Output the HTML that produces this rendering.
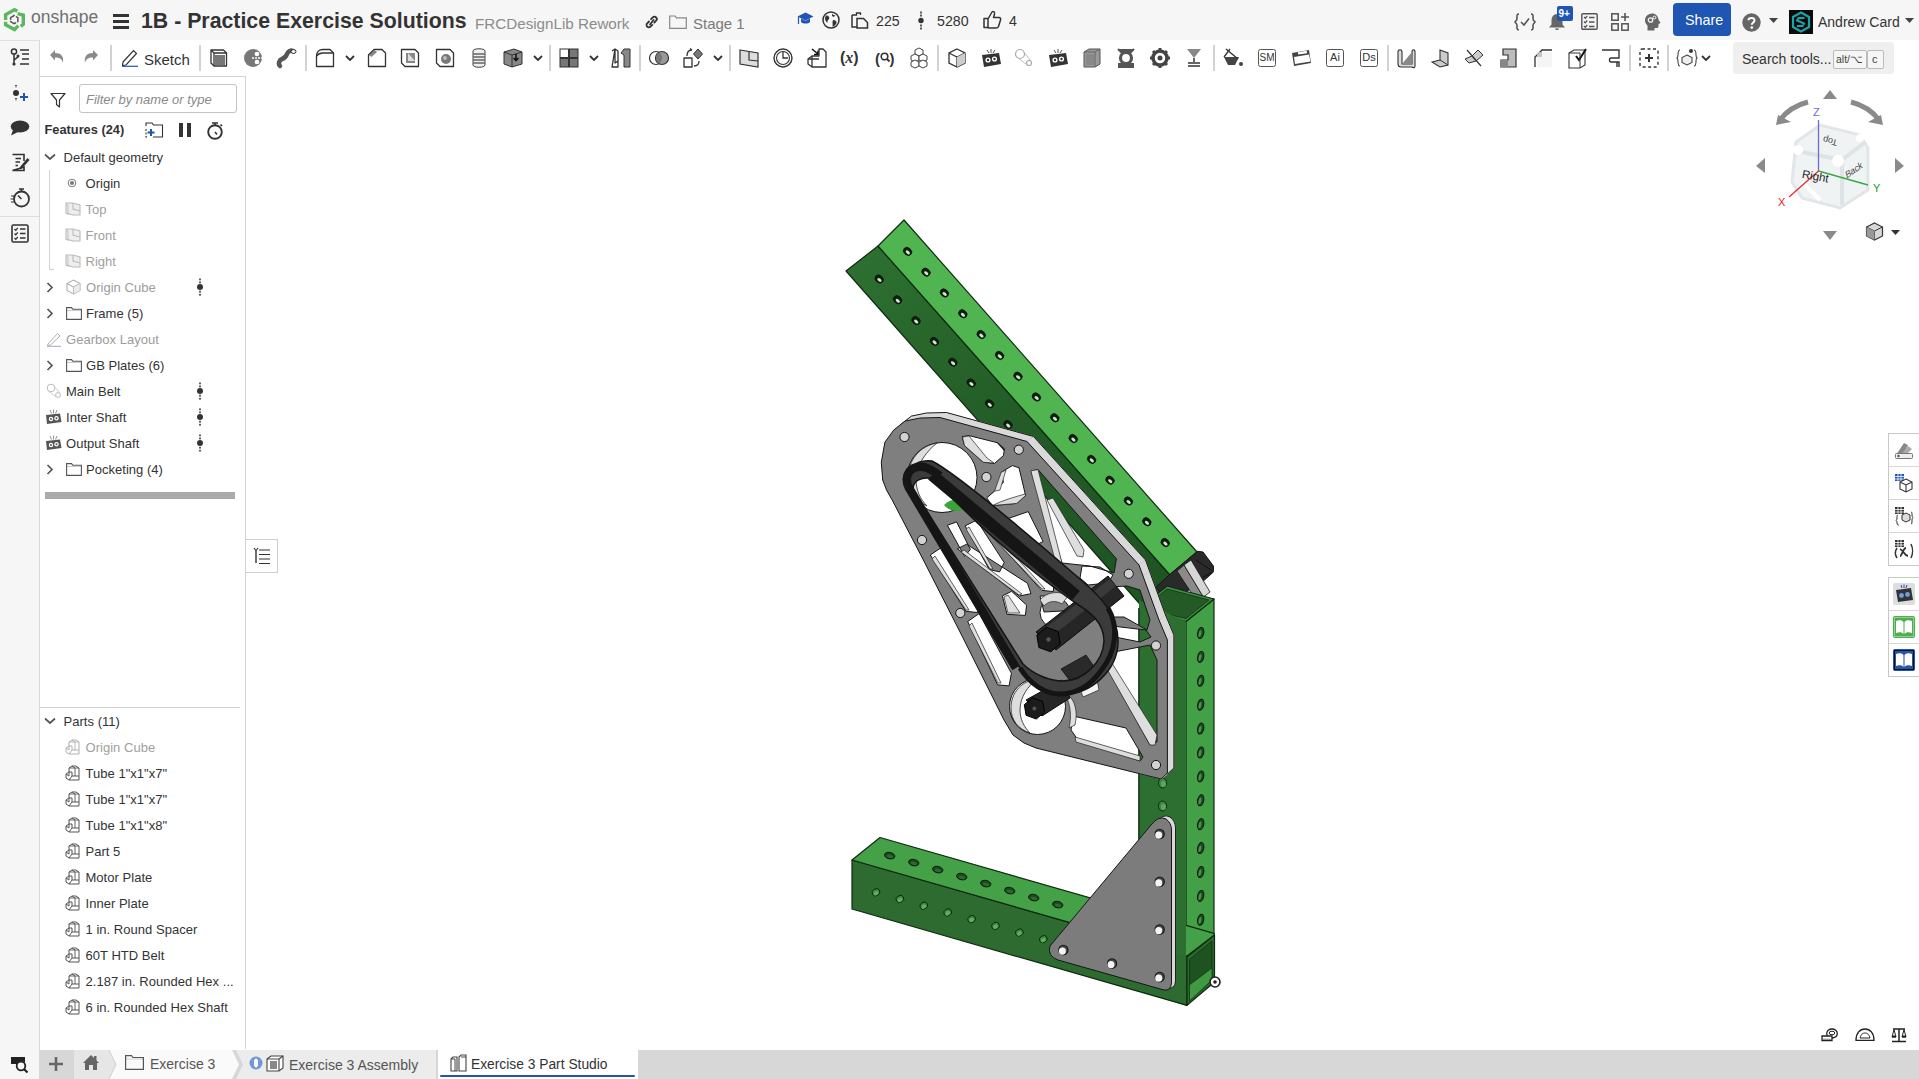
<!DOCTYPE html><html><head><meta charset="utf-8"><style>
*{margin:0;padding:0;box-sizing:border-box}
html,body{width:1919px;height:1079px;overflow:hidden;background:#fff;font-family:"Liberation Sans",sans-serif;color:#333}
.a{position:absolute}
.t{position:absolute;white-space:nowrap;line-height:1}
svg.i{position:absolute;overflow:visible}
</style></head><body>
<div class="a" style="left:0;top:0;width:1919px;height:40px;background:#f6f6f6"></div>
<div class="a" style="left:0;top:40px;width:40px;height:1039px;background:#f6f6f6;border-right:1px solid #d8d8d8;border-top:1px solid #e0e0e0"></div>
<div class="a" style="left:0;top:216px;width:39px;height:1px;background:#dedede"></div>
<div class="a" style="left:40px;top:76px;width:206px;height:973px;background:#fff;border-right:1px solid #d4d4d4;border-top:1px solid #d4d4d4"></div>
<div class="a" style="left:40px;top:1050px;width:1879px;height:29px;background:#d7d7d7"></div>
<svg class="i" style="left:0px;top:0px" width="30" height="35" viewBox="0 0 30 35"><g fill="none" stroke="#5cb85c" stroke-width="3.4" stroke-linejoin="miter"><path d="M5.6 20 V14.8 L14.5 9.6 L17.3 11.2"/><path d="M17.6 13.6 L23.3 15 V24.3 L20.8 26.3"/><path d="M5.6 21.8 V24.8 L14.5 29.6 L18.3 25.6"/></g><g fill="none" stroke="#555" stroke-width="1.5" stroke-linecap="round"><path d="M10.6 19.5 V17.6 L14.2 15.5"/><path d="M16.5 16.8 L17.9 17.6 V21.8"/><path d="M10.6 21.6 L14.2 23.7 L15.6 22.9"/></g></svg>
<div class="t" style="left:31px;top:9.19px;font-size:17.5px;color:#6f6f6f;font-weight:normal;font-style:normal;">onshape</div>
<div class="a" style="left:113px;top:14px;width:16px;height:2.6px;background:#333"></div>
<div class="a" style="left:113px;top:20px;width:16px;height:2.6px;background:#333"></div>
<div class="a" style="left:113px;top:26px;width:16px;height:2.6px;background:#333"></div>
<div class="t" style="left:141px;top:10.97px;font-size:21.3px;color:#333;font-weight:bold;font-style:normal;">1B - Practice Exercise Solutions</div>
<div class="t" style="left:475px;top:15.73px;font-size:15.2px;color:#8c8c8c;font-weight:normal;font-style:normal;">FRCDesignLib Rework</div>
<svg class="i" style="left:644px;top:15px" width="15" height="14" viewBox="0 0 15 14"><g fill="none" stroke="#333" stroke-width="1.8" stroke-linecap="round"><path d="M6 9.5 L9.5 5"/><path d="M5 6.5 L3.2 8.3 a2.3 2.3 0 0 0 3.3 3.3 L8.3 9.8"/><path d="M7 4.2 L8.8 2.4 a2.3 2.3 0 0 1 3.3 3.3 L10.3 7.5"/></g></svg>
<svg class="i" style="left:669px;top:15px" width="18" height="14" viewBox="0 0 18 14"><path d="M0.7 1 H6 L7.5 2.8 H17.3 V13.3 H0.7 Z" fill="none" stroke="#888" stroke-width="1.2"/></svg>
<div class="t" style="left:693px;top:15.90px;font-size:15px;color:#7a7a7a;font-weight:normal;font-style:normal;">Stage 1</div>
<svg class="i" style="left:797px;top:12px" width="17" height="15" viewBox="0 0 17 15"><path d="M8.5 0.5 L16.5 4.5 L8.5 8.5 L0.5 4.5 Z" fill="#1f55b3"/><path d="M4 6.5 V10 C6 12 11 12 13 10 V6.5 L8.5 8.8 Z" fill="#1f55b3"/><path d="M1.5 5 V12" stroke="#1f55b3" stroke-width="1.2"/></svg>
<svg class="i" style="left:822px;top:11px" width="18" height="18" viewBox="0 0 18 18"><circle cx="9" cy="9" r="8" fill="none" stroke="#333" stroke-width="1.5"/><path d="M4 4.5 C6 4 8 6 7 8 C6 9 5 10 5.5 12 C4 11 3 9 3 7 Z M10 2.5 C11 4 12 4 13.5 4.5 C12 6 11 6 10 5 Z M11 9 C13 9 15 10 14.5 12 C13.5 14 12 15.5 10.5 15.8 C11 13 10 11 11 9 Z" fill="#333"/></svg>
<svg class="i" style="left:851px;top:12px" width="18" height="17" viewBox="0 0 18 17"><path d="M1 3 H5.5 V1 H9.5 V3" fill="none" stroke="#333" stroke-width="1.3"/><path d="M1 3 V15 H6" fill="none" stroke="#333" stroke-width="1.5"/><path d="M6 6.5 H12.5 L16.5 10.5 V16 H6 Z" fill="none" stroke="#333" stroke-width="1.5"/></svg>
<div class="t" style="left:876px;top:13.78px;font-size:14.2px;color:#333;font-weight:normal;font-style:normal;">225</div>
<svg class="i" style="left:918px;top:11px" width="6" height="19" viewBox="0 0 6 19"><circle cx="3" cy="9.5" r="2.7" fill="#333"/><rect x="2.2" y="0.5" width="1.6" height="2" fill="#333"/><rect x="2.2" y="3.5" width="1.6" height="2" fill="#333"/><rect x="2.2" y="13.5" width="1.6" height="2" fill="#333"/><rect x="2.2" y="16.5" width="1.6" height="2" fill="#333"/></svg>
<div class="t" style="left:937px;top:13.78px;font-size:14.2px;color:#333;font-weight:normal;font-style:normal;">5280</div>
<svg class="i" style="left:983px;top:10px" width="19" height="19" viewBox="0 0 19 19"><path d="M1 8.5 H5 V17.5 H1 Z M5 9 L9 2 C10.5 1 12 2 11.5 4 L10.5 7.5 H16 C17.5 7.5 18 9 17.5 10 L15.5 16.5 C15 17.5 14 18 13 18 H5" fill="none" stroke="#333" stroke-width="1.5" stroke-linejoin="round"/></svg>
<div class="t" style="left:1009px;top:13.78px;font-size:14.2px;color:#333;font-weight:normal;font-style:normal;">4</div>
<svg class="i" style="left:1514px;top:13px" width="22" height="18" viewBox="0 0 22 18"><path d="M5 1 C2.5 1 3 3 3 5.5 C3 8 1 8.5 1 9 C1 9.5 3 10 3 12.5 C3 15 2.5 17 5 17 M17 1 C19.5 1 19 3 19 5.5 C19 8 21 8.5 21 9 C21 9.5 19 10 19 12.5 C19 15 19.5 17 17 17" fill="none" stroke="#555" stroke-width="1.6"/><path d="M7 9 L10 12 L15 5.5" fill="none" stroke="#555" stroke-width="1.6"/></svg>
<svg class="i" style="left:1547px;top:12px" width="20" height="19" viewBox="0 0 20 19"><path d="M10 2 C5.5 2 4.5 6 4.5 9 V12.5 L2 15.5 H18 L15.5 12.5 V9 C15.5 6 14.5 2 10 2 Z M8 16.5 C8 18.5 12 18.5 12 16.5 Z" fill="#666"/></svg>
<div class="a" style="left:1557px;top:6px;width:16px;height:15px;background:#1f55b3;border-radius:2px"></div>
<div class="t" style="left:1558.5px;top:9.04px;font-size:10px;color:#fff;font-weight:bold;font-style:normal;">9+</div>
<svg class="i" style="left:1581px;top:13px" width="17" height="17" viewBox="0 0 17 17"><rect x="0.8" y="0.8" width="15.4" height="15.4" rx="1" fill="none" stroke="#555" stroke-width="1.4"/><path d="M3 4 L4.3 5.3 L6.2 3 M3 8.5 L4.3 9.8 L6.2 7.5 M3 13 L4.3 14.3 L6.2 12 M8 4.5 H13.5 M8 9 H13.5 M8 13.5 H13.5" fill="none" stroke="#555" stroke-width="1.3"/></svg>
<svg class="i" style="left:1611px;top:13px" width="19" height="18" viewBox="0 0 19 18"><rect x="0.8" y="0.8" width="6.4" height="6.4" fill="none" stroke="#555" stroke-width="1.5"/><rect x="0.8" y="10.8" width="6.4" height="6.4" fill="none" stroke="#555" stroke-width="1.5"/><rect x="10.8" y="10.8" width="6.4" height="6.4" fill="none" stroke="#555" stroke-width="1.5"/><path d="M14 0 V8 M10 4 H18" stroke="#555" stroke-width="1.6"/></svg>
<svg class="i" style="left:1644px;top:13px" width="18" height="18" viewBox="0 0 18 18"><path d="M8.5 0.5 C4 0.5 1 3.5 1 7.5 C1 10 2.5 11.5 3.5 12.5 V17.5 H10.5 V15 H13 C14 15 14.5 14 14.5 13 V11 L16.5 10 L14.5 6.5 C14 3 11.5 0.5 8.5 0.5 Z" fill="#666"/><circle cx="6.5" cy="7" r="2.2" fill="none" stroke="#f6f6f6" stroke-width="1.3"/><circle cx="10.5" cy="4.5" r="1.4" fill="none" stroke="#f6f6f6" stroke-width="1"/></svg>
<div class="a" style="left:1673px;top:3px;width:58px;height:33px;background:#1f55b3;border-radius:4px"></div>
<div class="t" style="left:1685px;top:13.40px;font-size:14.3px;color:#fff;font-weight:normal;font-style:normal;">Share</div>
<svg class="i" style="left:1742px;top:13px" width="19" height="19" viewBox="0 0 19 19"><circle cx="9.5" cy="9.5" r="9.2" fill="#666"/><path d="M6.5 7.2 C6.5 4.5 12.5 4.2 12.5 7.5 C12.5 9.5 9.8 9.5 9.8 11.8" fill="none" stroke="#fff" stroke-width="2"/><circle cx="9.8" cy="14.6" r="1.3" fill="#fff"/></svg>
<svg class="i" style="left:1769px;top:18px" width="9" height="5" viewBox="0 0 9 5"><path d="M0 0 H9 L4.5 5 Z" fill="#444"/></svg>
<svg class="i" style="left:1789px;top:10px" width="24" height="24" viewBox="0 0 24 24"><rect width="24" height="24" fill="#0b0b0b"/><path d="M12 2.5 L20 7 V17 L12 21.5 L4 17 V7 Z" fill="none" stroke="#1aa3a9" stroke-width="2.2"/><path d="M15.5 8 L9.5 8 L8 10.5 L15 13.5 L13.5 16 L8 16" fill="none" stroke="#1aa3a9" stroke-width="2"/></svg>
<div class="t" style="left:1818px;top:14.65px;font-size:14px;color:#333;font-weight:normal;font-style:normal;">Andrew Card</div>
<svg class="i" style="left:1905px;top:18px" width="9" height="5" viewBox="0 0 9 5"><path d="M0 0 H9 L4.5 5 Z" fill="#444"/></svg>
<svg class="i" style="left:10px;top:48px" width="20" height="19" viewBox="0 0 20 19"><circle cx="4" cy="3.5" r="2.6" fill="none" stroke="#333" stroke-width="1.5"/><path d="M4 6 V16 M4 13 C4 10 8 11 8 8" fill="none" stroke="#333" stroke-width="1.5"/><circle cx="4" cy="16" r="1.6" fill="#333"/><circle cx="8" cy="8" r="1.5" fill="#333"/><path d="M10 2 H19 M12 6 H19 M12 11 H19 M10 16 H19" stroke="#333" stroke-width="1.6"/></svg>
<svg class="i" style="left:46.0px;top:47.0px" width="22" height="22" viewBox="0 0 22 22"><path d="M4 8 L9 3 V6 C15 6 18 9 17 16 C16 12 14 10.5 9 10.5 V13.5 Z" fill="#8a8a8a"/></svg>
<svg class="i" style="left:80.0px;top:47.0px" width="22" height="22" viewBox="0 0 22 22"><path d="M18 8 L13 3 V6 C7 6 4 9 5 16 C6 12 8 10.5 13 10.5 V13.5 Z" fill="#8a8a8a"/></svg>
<div class="a" style="left:110px;top:45px;width:2px;height:26px;background:#d2d2d2"></div>
<svg class="i" style="left:120px;top:48px" width="19" height="19" viewBox="0 0 19 19"><path d="M3 14 L13.5 2.5 L16.5 5.5 L6 17 L2.5 17.5 Z" fill="none" stroke="#333" stroke-width="1.2"/><path d="M2 18.3 H18" stroke="#1f55b3" stroke-width="1.2"/></svg>
<div class="t" style="left:144px;top:51.60px;font-size:15px;color:#333;font-weight:normal;font-style:normal;">Sketch</div>
<div class="a" style="left:199px;top:45px;width:2px;height:26px;background:#d2d2d2"></div>
<svg class="i" style="left:208.0px;top:47.0px" width="22" height="22" viewBox="0 0 22 22"><path d="M3 3 H15.5 L18.5 6 V19 H6 L3 16 Z" stroke="#333" fill="none" stroke-width="1.3" stroke-linejoin="round"/><rect x="7" y="8" width="10" height="10" fill="#777"/><path d="M3 3 L6 6 H18.5 M6 6 V19" stroke="#333" fill="none" stroke-width="1.3" stroke-linejoin="round"/></svg>
<svg class="i" style="left:242.0px;top:47.0px" width="22" height="22" viewBox="0 0 22 22"><path d="M11 2 A9 9 0 1 0 11 20 A9 9 0 0 1 11 2 Z" fill="#777"/><circle cx="11" cy="11" r="9" fill="#777"/><circle cx="15" cy="7" r="2.3" fill="#fff"/><circle cx="15" cy="15" r="2.3" fill="#fff"/><path d="M10 11 H21" stroke="#fff" stroke-width="1.3" stroke-dasharray="2 1"/></svg>
<svg class="i" style="left:276.0px;top:47.0px" width="22" height="22" viewBox="0 0 22 22"><path d="M4 19 C2 17 3 13 6 12 C9 11 10 10 11 7 C12 4 15 3 17 4" fill="none" stroke="#555" stroke-width="4.5" stroke-linecap="round"/><ellipse cx="17.5" cy="4.5" rx="2.5" ry="2" fill="#eee" stroke="#333"/></svg>
<div class="a" style="left:305px;top:45px;width:2px;height:26px;background:#d2d2d2"></div>
<svg class="i" style="left:314.0px;top:47.0px" width="22" height="22" viewBox="0 0 22 22"><path d="M2.5 19.5 V9 C2.5 5 5 2.5 9 2.5 H16 L19.5 6 V19.5 Z" stroke="#333" fill="none" stroke-width="1.3" stroke-linejoin="round"/><path d="M2.5 9 C4 7 6 6 9 6 H19.5" stroke="#333" fill="none" stroke-width="1.3" stroke-linejoin="round"/></svg>
<svg class="i" style="left:345px;top:55px" width="10" height="6" viewBox="0 0 10 6"><path d="M1 1 L5 5 L9 1" fill="none" stroke="#333" stroke-width="1.8"/></svg>
<svg class="i" style="left:366.0px;top:47.0px" width="22" height="22" viewBox="0 0 22 22"><path d="M2.5 19.5 V8 L8 2.5 H16 L19.5 6 V19.5 Z" stroke="#333" fill="none" stroke-width="1.3" stroke-linejoin="round"/><path d="M2.5 8 L5.5 6 L9 4" stroke="#333" fill="none" stroke-width="1.3" stroke-linejoin="round"/><path d="M3 8 L8.5 3 L11 5 L5.5 10Z" fill="#888"/></svg>
<svg class="i" style="left:399.0px;top:47.0px" width="22" height="22" viewBox="0 0 22 22"><path d="M2.5 2.5 H16 L19.5 6 V19.5 H6 L2.5 16 Z" stroke="#333" fill="none" stroke-width="1.3" stroke-linejoin="round"/><path d="M7 6 V16 H16 V6" fill="#888"/><path d="M9 6 V14 H16" fill="#ddd"/></svg>
<svg class="i" style="left:434.0px;top:47.0px" width="22" height="22" viewBox="0 0 22 22"><path d="M2.5 2.5 H16 L19.5 6 V19.5 H6 L2.5 16 Z" stroke="#333" fill="none" stroke-width="1.3" stroke-linejoin="round"/><circle cx="12" cy="12" r="5" fill="#777"/><circle cx="11" cy="11" r="2" fill="#bbb"/></svg>
<svg class="i" style="left:468.0px;top:47.0px" width="22" height="22" viewBox="0 0 22 22"><path d="M5 4 C5 1 17 1 17 4 V18 C17 21 5 21 5 18 Z" fill="#eee" stroke="#444" stroke-width="1"/><path d="M5 7 H17 M5 10 H17 M5 13 H17 M5 16 H17" stroke="#666" stroke-width="1.3"/></svg>
<svg class="i" style="left:502.0px;top:47.0px" width="22" height="22" viewBox="0 0 22 22"><path d="M2 5 L12 2 L20 5 V17 L10 20 L2 17 Z" fill="#888" stroke="#333" stroke-width="1"/><path d="M2 5 L10 8 L20 5 M10 8 V20" stroke="#333" fill="none" stroke-width="1"/><path d="M14 7 V13 M11.5 11 L14 13.5 L16.5 11" stroke="#111" stroke-width="1.6" fill="none"/></svg>
<svg class="i" style="left:533px;top:55px" width="10" height="6" viewBox="0 0 10 6"><path d="M1 1 L5 5 L9 1" fill="none" stroke="#333" stroke-width="1.8"/></svg>
<div class="a" style="left:549px;top:45px;width:2px;height:26px;background:#d2d2d2"></div>
<svg class="i" style="left:558.0px;top:47.0px" width="22" height="22" viewBox="0 0 22 22"><rect x="2" y="2" width="8.5" height="8.5" fill="#fff" stroke="#333"/><rect x="11.5" y="2" width="8.5" height="8.5" fill="#777" stroke="#333"/><rect x="2" y="11.5" width="8.5" height="8.5" fill="#777" stroke="#333"/><rect x="11.5" y="11.5" width="8.5" height="8.5" fill="#777" stroke="#333"/></svg>
<svg class="i" style="left:589px;top:55px" width="10" height="6" viewBox="0 0 10 6"><path d="M1 1 L5 5 L9 1" fill="none" stroke="#333" stroke-width="1.8"/></svg>
<svg class="i" style="left:610.0px;top:47.0px" width="22" height="22" viewBox="0 0 22 22"><path d="M2 4 L5 2 V16 L8 14 V6 M5 2 L8 4 V20 L2 20 Z" stroke="#333" fill="none" stroke-width="1.3" stroke-linejoin="round"/><path d="M11 6 L14 2 H20 V20 H14 V8 Z" fill="#888" stroke="#333"/></svg>
<div class="a" style="left:639px;top:45px;width:2px;height:26px;background:#d2d2d2"></div>
<svg class="i" style="left:648.0px;top:47.0px" width="22" height="22" viewBox="0 0 22 22"><circle cx="8" cy="11" r="6.5" fill="#fff" stroke="#333" stroke-width="1.2"/><circle cx="14" cy="11" r="6.5" fill="#999" stroke="#333" stroke-width="1.2"/><path d="M11 5.5 A6.5 6.5 0 0 1 11 16.5 A6.5 6.5 0 0 1 11 5.5Z" fill="#777"/></svg>
<svg class="i" style="left:682.0px;top:47.0px" width="22" height="22" viewBox="0 0 22 22"><rect x="2" y="11" width="8" height="9" stroke="#333" fill="none" stroke-width="1.3" stroke-linejoin="round"/><path d="M16 2 L20.5 7 L16 12 L11.5 7Z" fill="#777" stroke="#333"/><path d="M5 9 C5 5 7 3 10 3 M10 3 L8 1.5 M17 14 C17 17 15 19 12 19" stroke="#333" fill="none" stroke-width="1.3"/></svg>
<svg class="i" style="left:713px;top:55px" width="10" height="6" viewBox="0 0 10 6"><path d="M1 1 L5 5 L9 1" fill="none" stroke="#333" stroke-width="1.8"/></svg>
<div class="a" style="left:729px;top:45px;width:2px;height:26px;background:#d2d2d2"></div>
<svg class="i" style="left:738.0px;top:47.0px" width="22" height="22" viewBox="0 0 22 22"><path d="M2 3 L20 6 V20 L2 17 Z" fill="#ddd" stroke="#333" stroke-width="1.2"/><path d="M11 4.5 V13 L20 14" stroke="#333" fill="none" stroke-width="1.2"/></svg>
<svg class="i" style="left:772.0px;top:47.0px" width="22" height="22" viewBox="0 0 22 22"><circle cx="11" cy="11" r="9" fill="none" stroke="#333" stroke-width="1.4"/><circle cx="11" cy="11" r="6.5" fill="none" stroke="#333" stroke-width="1.1"/><path d="M11 5 V11 H16" stroke="#333" fill="none" stroke-width="1.3"/></svg>
<svg class="i" style="left:806.0px;top:47.0px" width="22" height="22" viewBox="0 0 22 22"><path d="M2 12 L6 9 H13 V2 H17 L20 5 V20 H6 L2 17 Z" stroke="#333" fill="none" stroke-width="1.3" stroke-linejoin="round"/><path d="M6 9 V20 M2 12 H13" stroke="#333" fill="none" stroke-width="1.3" stroke-linejoin="round"/><path d="M6 2 L12 7 M12 3.5 V7.5 H8" stroke="#111" fill="none" stroke-width="1.5"/></svg>
<div class="t" style="left:840px;top:50.46px;font-size:16px;color:#333;font-weight:bold;font-style:normal;">(<i style="font-family:Liberation Serif">x</i>)</div>
<div class="t" style="left:875px;top:51.30px;font-size:15px;color:#333;font-weight:bold;font-style:normal;">(</div>
<div class="t" style="left:889.5px;top:51.30px;font-size:15px;color:#333;font-weight:bold;font-style:normal;">)</div>
<svg class="i" style="left:880px;top:52px" width="10" height="11" viewBox="0 0 10 11"><circle cx="4.5" cy="4.5" r="3.3" fill="none" stroke="#333" stroke-width="1.6"/><path d="M7 7 L9.5 9.5" stroke="#333" stroke-width="1.8"/></svg>
<svg class="i" style="left:908.0px;top:47.0px" width="22" height="22" viewBox="0 0 22 22"><g fill="#fff" stroke="#444" stroke-width="1"><path d="M11 1 L15 3 V7 L11 9 L7 7 V3Z"/><path d="M7 7 L11 9 V13 L7 15 L3 13 V9Z"/><path d="M15 7 L19 9 V13 L15 15 L11 13 V9Z"/><path d="M7 13 L11 15 V19 L7 21 L3 19 V15Z" /><path d="M15 13 L19 15 V19 L15 21 L11 19 V15Z"/></g></svg>
<div class="a" style="left:937px;top:45px;width:2px;height:26px;background:#d2d2d2"></div>
<svg class="i" style="left:946.0px;top:47.0px" width="22" height="22" viewBox="0 0 22 22"><path d="M11 2 L19 6 V16 L11 20 L3 16 V6 Z" fill="#fff" stroke="#333" stroke-width="1.3"/><path d="M3 6 L11 10 L19 6 M11 10 V20" stroke="#333" fill="none" stroke-width="1.3"/><path d="M11 10 L19 6 V16 L11 20Z" fill="#ccc"/></svg>
<svg class="i" style="left:980.0px;top:47.0px" width="22" height="22" viewBox="0 0 22 22"><path d="M2 8 L19 6 L21 17 L4 20 Z" fill="#333"/><circle cx="8" cy="13" r="2.6" fill="#fff"/><circle cx="14.5" cy="12" r="2.6" fill="#fff"/><circle cx="8" cy="13" r="1.2" fill="#333"/><circle cx="14.5" cy="12" r="1.2" fill="#333"/><path d="M7 3 L9 6 M11 2 V6 M15 3 L13 6" stroke="#555" stroke-width="1"/></svg>
<svg class="i" style="left:1013.0px;top:47.0px" width="22" height="22" viewBox="0 0 22 22"><circle cx="7" cy="7" r="4.5" fill="none" stroke="#aaa" stroke-width="1.2"/><circle cx="16" cy="16" r="2.5" fill="none" stroke="#aaa" stroke-width="1.2"/><path d="M4 10 L14 18 M10 4 L18 14" stroke="#bbb" stroke-width="1"/></svg>
<svg class="i" style="left:1047.0px;top:47.0px" width="22" height="22" viewBox="0 0 22 22"><path d="M2 8 L19 6 L21 17 L4 20 Z" fill="#333"/><circle cx="8" cy="13" r="2.6" fill="#fff"/><circle cx="14.5" cy="12" r="2.6" fill="#fff"/><circle cx="8" cy="13" r="1.2" fill="#333"/><circle cx="14.5" cy="12" r="1.2" fill="#333"/><path d="M7 3 L9 6 M11 2 V6 M15 3 L13 6" stroke="#555" stroke-width="1"/></svg>
<svg class="i" style="left:1081.0px;top:47.0px" width="22" height="22" viewBox="0 0 22 22"><path d="M3 5 L8 2 H19 V17 L14 20 H3 Z" fill="#999" stroke="#555"/><path d="M3 5 H14 V20 M14 5 L19 2" stroke="#666" fill="none"/><rect x="5" y="7" width="8" height="11" fill="#888"/></svg>
<svg class="i" style="left:1115.0px;top:47.0px" width="22" height="22" viewBox="0 0 22 22"><path d="M3 2 L6 5 H16 L19 2 M4 20 H18 V17 H4 Z" fill="#555" stroke="#555" stroke-width="2"/><circle cx="11" cy="11" r="5.5" fill="none" stroke="#555" stroke-width="3.2"/></svg>
<svg class="i" style="left:1149.0px;top:47.0px" width="22" height="22" viewBox="0 0 22 22"><circle cx="11" cy="11" r="7" fill="none" stroke="#444" stroke-width="3.5"/><path d="M11 1 V4 M11 18 V21 M1 11 H4 M18 11 H21 M4 4 L6 6 M16 16 L18 18 M4 18 L6 16 M16 6 L18 4" stroke="#444" stroke-width="3"/><circle cx="11" cy="11" r="2.5" fill="#444"/></svg>
<svg class="i" style="left:1183.0px;top:47.0px" width="22" height="22" viewBox="0 0 22 22"><path d="M4 2 H18 L11 11 Z" fill="#888"/><path d="M11 11 V15 M5 16 H17 M5 19 H17" stroke="#666" stroke-width="2"/></svg>
<div class="a" style="left:1213px;top:45px;width:2px;height:26px;background:#d2d2d2"></div>
<svg class="i" style="left:1222.0px;top:47.0px" width="22" height="22" viewBox="0 0 22 22"><path d="M2 10 H17 L13 18 H6 Z" fill="#444"/><path d="M4 2 L16 12 M8 2 L2 10" stroke="#333" stroke-width="1.3" fill="none"/><circle cx="19" cy="17" r="2" fill="#444"/></svg>
<svg class="i" style="left:1256.0px;top:47.0px" width="22" height="22" viewBox="0 0 22 22"><rect x="2.5" y="2.5" width="17" height="17" rx="2" fill="#fff" stroke="#555" stroke-width="1"/></svg>
<div class="t" style="left:1257px;top:52.5px;width:20px;text-align:center;font-size:10px;color:#333">SM</div>
<svg class="i" style="left:1290.0px;top:47.0px" width="22" height="22" viewBox="0 0 22 22"><path d="M2 6 L19 3 L21 16 L4 19 Z" fill="#444"/><path d="M4 10 L19 7.5 L20.5 14.5 L5 17Z" fill="#fff"/><rect x="8" y="4.5" width="9" height="2.5" fill="#fff" transform="rotate(-9 12 6)"/></svg>
<svg class="i" style="left:1324.0px;top:47.0px" width="22" height="22" viewBox="0 0 22 22"><rect x="2.5" y="2.5" width="17" height="17" rx="2" fill="#fff" stroke="#555" stroke-width="1"/></svg>
<div class="t" style="left:1325px;top:52.0px;width:20px;text-align:center;font-size:11px;color:#333">Ai</div>
<svg class="i" style="left:1358.0px;top:47.0px" width="22" height="22" viewBox="0 0 22 22"><rect x="2.5" y="2.5" width="17" height="17" rx="2" fill="#fff" stroke="#555" stroke-width="1"/></svg>
<div class="t" style="left:1359px;top:52.0px;width:20px;text-align:center;font-size:11px;color:#333">Ds</div>
<div class="a" style="left:1387px;top:45px;width:2px;height:26px;background:#d2d2d2"></div>
<svg class="i" style="left:1395.0px;top:47.0px" width="22" height="22" viewBox="0 0 22 22"><path d="M3 5 C3 2 7 2 7 5 V17 H17 V5 C17 2 20 2 20 5 V19 C20 21 18 21 17 20 H6 C4 20 3 19 3 17Z" fill="#ddd" stroke="#333" stroke-width="1.1"/><path d="M7 17 L17 17 L17 5" fill="#888"/></svg>
<svg class="i" style="left:1429.0px;top:47.0px" width="22" height="22" viewBox="0 0 22 22"><path d="M3 15 L11 13 V3 L19 6 V18 L11 20 Z" fill="#ccc" stroke="#333" stroke-width="1.1"/><path d="M11 13 L19 18" stroke="#333" stroke-width="1"/></svg>
<svg class="i" style="left:1463.0px;top:47.0px" width="22" height="22" viewBox="0 0 22 22"><path d="M2 12 L9 9 L13 14 L6 16Z M9 9 L15 3 L20 8 L13 14" fill="#ccc" stroke="#333" stroke-width="1"/><path d="M4 3 L18 19" stroke="#333" stroke-width="1.2"/></svg>
<svg class="i" style="left:1497.0px;top:47.0px" width="22" height="22" viewBox="0 0 22 22"><path d="M6 2 H19 V20 H4 V13 H11 V8 H6 Z" fill="#bbb" stroke="#333" stroke-width="1.2"/><path d="M4 13 H11 V20 H4Z" fill="#888"/></svg>
<svg class="i" style="left:1532.0px;top:47.0px" width="22" height="22" viewBox="0 0 22 22"><path d="M3 20 V10 L10 3 H20" fill="none" stroke="#333" stroke-width="1.3"/><path d="M4 10 L10 4 V10 Z" fill="#888"/><rect x="5" y="5" width="15" height="15" fill="#eee" opacity=".6"/></svg>
<svg class="i" style="left:1566.0px;top:47.0px" width="22" height="22" viewBox="0 0 22 22"><path d="M3 6 L8 3 H19 V18 L14 21 H3 Z" fill="#fff" stroke="#333" stroke-width="1.1"/><path d="M10 9 L13 13 L20 2" stroke="#111" stroke-width="2" fill="none"/><path d="M3 6 H14 V21" stroke="#333" fill="none"/></svg>
<svg class="i" style="left:1600.0px;top:47.0px" width="22" height="22" viewBox="0 0 22 22"><path d="M2 3 H19 V11 H11 C9 11 9 15 11 15 H19 V20" fill="none" stroke="#333" stroke-width="1.4"/><path d="M17 15 V20" stroke="#333" stroke-width="1.4"/></svg>
<div class="a" style="left:1629px;top:45px;width:2px;height:26px;background:#d2d2d2"></div>
<svg class="i" style="left:1638.0px;top:47.0px" width="22" height="22" viewBox="0 0 22 22"><rect x="2" y="2" width="18" height="18" rx="2" fill="none" stroke="#333" stroke-width="1.4" stroke-dasharray="3 2.5"/><path d="M11 7 V15 M7 11 H15" stroke="#333" stroke-width="2"/></svg>
<div class="a" style="left:1667px;top:45px;width:2px;height:26px;background:#d2d2d2"></div>
<svg class="i" style="left:1676.0px;top:47.0px" width="22" height="22" viewBox="0 0 22 22"><path d="M4 3 C2 3 2 5 2 8 C2 10 1 11 1 11 C1 11 2 12 2 14 C2 17 2 19 4 19 M18 3 C20 3 20 5 20 8 C20 10 21 11 21 11 C21 11 20 12 20 14 C20 17 20 19 18 19" fill="none" stroke="#444" stroke-width="1.1"/><path d="M11 8 L16 10.5 V15.5 L11 18 L6 15.5 V10.5 Z" fill="#eee" stroke="#444" stroke-width="1.1"/><circle cx="15" cy="4" r="2" fill="#333"/></svg>
<svg class="i" style="left:1701px;top:55px" width="10" height="6" viewBox="0 0 10 6"><path d="M1 1 L5 5 L9 1" fill="none" stroke="#333" stroke-width="1.8"/></svg>
<div class="a" style="left:1733px;top:42px;width:161px;height:32px;background:#efefef;border-radius:4px"></div>
<div class="t" style="left:1742px;top:51.65px;font-size:14px;color:#333;font-weight:normal;font-style:normal;">Search tools...</div>
<div class="a" style="left:1833px;top:50px;width:34px;height:19px;border:1px solid #bbb;border-radius:2px;background:#f6f6f6"></div>
<div class="t" style="left:1836px;top:54.11px;font-size:10.5px;color:#444;font-weight:normal;font-style:normal;">alt/&#x2325;</div>
<div class="a" style="left:1867px;top:50px;width:17px;height:19px;border:1px solid #bbb;border-radius:2px;background:#f6f6f6"></div>
<div class="t" style="left:1872px;top:53.69px;font-size:11px;color:#444;font-weight:normal;font-style:normal;">c</div>
<svg class="i" style="left:10px;top:84px" width="20" height="20" viewBox="0 0 20 20"><path d="M6 1 V4 M6 14 V17" stroke="#333" stroke-width="1.6" stroke-dasharray="1.6 1.2"/><circle cx="6" cy="9" r="3" fill="#333"/><path d="M14 9 V17 M10 13 H18" stroke="#1f55b3" stroke-width="2"/></svg>
<svg class="i" style="left:10px;top:120px" width="20" height="16" viewBox="0 0 20 16"><ellipse cx="10" cy="6.5" rx="9.3" ry="6" fill="#333"/><path d="M3 10 L1 15.5 L9 11.5Z" fill="#333"/></svg>
<svg class="i" style="left:11px;top:153px" width="19" height="19" viewBox="0 0 19 19"><path d="M1.5 1.5 H13 V8 M13 14 V17.5 H1.5 Z" fill="none" stroke="#333" stroke-width="1.6"/><path d="M4.5 5.5 H10 M4.5 9 H9 M4.5 12.5 H7" stroke="#333" stroke-width="1.5"/><path d="M9 14 L16.5 5 L18.5 7 L11 15.5 L8.5 16.5Z" fill="#333"/></svg>
<svg class="i" style="left:10px;top:187px" width="21" height="21" viewBox="0 0 21 21"><circle cx="11.5" cy="12" r="7.5" fill="none" stroke="#333" stroke-width="1.8"/><path d="M9 2 H14 M11.5 2 V4.5 M11.5 12 L8 8.5" stroke="#333" stroke-width="1.6"/><path d="M1 9 H4 M0.5 12 H3.5 M1 15 H4" stroke="#333" stroke-width="1"/></svg>
<svg class="i" style="left:11px;top:224px" width="18" height="19" viewBox="0 0 18 19"><rect x="1" y="1" width="16" height="17" rx="1.5" fill="none" stroke="#333" stroke-width="1.6"/><path d="M3.5 5 L4.8 6.3 L6.8 3.8 M3.5 9.5 L4.8 10.8 L6.8 8.3 M3.5 14 L4.8 15.3 L6.8 12.8 M9 5 H14.5 M9 9.5 H14.5 M9 14 H14.5" fill="none" stroke="#333" stroke-width="1.3"/></svg>
<svg class="i" style="left:50px;top:92px" width="16" height="16" viewBox="0 0 16 16"><path d="M1 1.5 H15 L9.5 8 V15 L6.5 12.5 V8 Z" fill="none" stroke="#333" stroke-width="1.2" stroke-linejoin="round"/></svg>
<div class="a" style="left:79px;top:84px;width:158px;height:29px;border:1px solid #c4c4c4;border-radius:3px;background:#fff"></div>
<div class="t" style="left:86px;top:92.50px;font-size:13px;color:#8a8a8a;font-weight:normal;font-style:italic;">Filter by name or type</div>
<div class="t" style="left:44.5px;top:123.96px;font-size:12.8px;color:#333;font-weight:bold;font-style:normal;">Features (24)</div>
<svg class="i" style="left:145px;top:122px" width="19" height="16" viewBox="0 0 19 16"><path d="M1 4 V1 H7 L8.5 3 H17.5 V15 H8" fill="none" stroke="#333" stroke-width="1.1"/><path d="M1 7 V15 H3" fill="none" stroke="#333" stroke-width="1.1" stroke-dasharray="2 1.5"/><path d="M6 7 V14 M2.5 10.5 H9.5" stroke="#1f55b3" stroke-width="2"/></svg>
<div class="a" style="left:179px;top:123px;width:4px;height:13.5px;background:#333"></div>
<div class="a" style="left:187px;top:123px;width:4px;height:13.5px;background:#333"></div>
<svg class="i" style="left:206px;top:121px" width="18" height="19" viewBox="0 0 18 19"><circle cx="9" cy="11" r="6.8" fill="none" stroke="#333" stroke-width="1.9"/><path d="M6 2 H12 M9 2 V4 M9 11 L11 13.5 M14.5 3.5 L16 5" stroke="#333" stroke-width="1.6"/></svg>
<svg class="i" style="left:44px;top:153px" width="12" height="8" viewBox="0 0 12 8"><path d="M1 1.5 L6 6 L11 1.5" fill="none" stroke="#555" stroke-width="1.7"/></svg>
<div class="t" style="left:63.5px;top:150.70px;font-size:13px;color:#333;font-weight:normal;font-style:normal;letter-spacing:0.03px;">Default geometry</div>
<div class="a" style="left:49px;top:170px;width:1px;height:100px;background:#d4d4d4"></div>
<div class="a" style="left:49px;top:269px;width:5px;height:1px;background:#d4d4d4"></div>
<svg class="i" style="left:67px;top:178px" width="10" height="10" viewBox="0 0 10 10"><circle cx="5" cy="5" r="3.8" fill="none" stroke="#777" stroke-width="1"/><circle cx="5" cy="5" r="2" fill="#777"/></svg>
<div class="t" style="left:85.5px;top:176.70px;font-size:13px;color:#333;font-weight:normal;font-style:normal;letter-spacing:0.03px;">Origin</div>
<svg class="i" style="left:65px;top:202px" width="16" height="14" viewBox="0 0 16 14"><path d="M1 1 L8 1 L15 3 L15 13 L8 13 L1 11 Z" fill="#eee" stroke="#bbb" stroke-width="1.1"/><path d="M8 1 V7 L15 9" fill="none" stroke="#bbb" stroke-width="1.1"/><path d="M1 1 L3 3 V13" fill="none" stroke="#bbb" stroke-width=".9"/></svg>
<div class="t" style="left:85.5px;top:202.70px;font-size:13px;color:#a0a0a0;font-weight:normal;font-style:normal;letter-spacing:0.03px;">Top</div>
<svg class="i" style="left:65px;top:228px" width="16" height="14" viewBox="0 0 16 14"><path d="M1 1 L8 1 L15 3 L15 13 L8 13 L1 11 Z" fill="#eee" stroke="#bbb" stroke-width="1.1"/><path d="M8 1 V7 L15 9" fill="none" stroke="#bbb" stroke-width="1.1"/><path d="M1 1 L3 3 V13" fill="none" stroke="#bbb" stroke-width=".9"/></svg>
<div class="t" style="left:85.5px;top:228.70px;font-size:13px;color:#a0a0a0;font-weight:normal;font-style:normal;letter-spacing:0.03px;">Front</div>
<svg class="i" style="left:65px;top:254px" width="16" height="14" viewBox="0 0 16 14"><path d="M1 1 L8 1 L15 3 L15 13 L8 13 L1 11 Z" fill="#eee" stroke="#bbb" stroke-width="1.1"/><path d="M8 1 V7 L15 9" fill="none" stroke="#bbb" stroke-width="1.1"/><path d="M1 1 L3 3 V13" fill="none" stroke="#bbb" stroke-width=".9"/></svg>
<div class="t" style="left:85.5px;top:254.70px;font-size:13px;color:#a0a0a0;font-weight:normal;font-style:normal;letter-spacing:0.03px;">Right</div>
<svg class="i" style="left:46px;top:281.5px" width="8" height="11" viewBox="0 0 8 11"><path d="M1.5 1 L6 5.5 L1.5 10" fill="none" stroke="#555" stroke-width="1.7"/></svg>
<svg class="i" style="left:66px;top:279px" width="15" height="16" viewBox="0 0 15 16"><path d="M7.5 1 L14 4.5 V11.5 L7.5 15 L1 11.5 V4.5 Z M1 4.5 L7.5 8 L14 4.5 M7.5 8 V15" fill="none" stroke="#b0b0b0" stroke-width="1.1"/><path d="M7.5 8 L14 4.5 V11.5 L7.5 15Z" fill="#e4e4e4" opacity=".7"/></svg>
<div class="t" style="left:86px;top:280.70px;font-size:13px;color:#9c9c9c;font-weight:normal;font-style:normal;letter-spacing:0.03px;">Origin Cube</div>
<svg class="i" style="left:197px;top:278px" width="6" height="18" viewBox="0 0 6 18"><circle cx="3" cy="9" r="3" fill="#333"/><rect x="2.2" y="0.5" width="1.6" height="1.8" fill="#333"/><rect x="2.2" y="3.5" width="1.6" height="1.8" fill="#333"/><rect x="2.2" y="12.8" width="1.6" height="1.8" fill="#333"/><rect x="2.2" y="15.8" width="1.6" height="1.8" fill="#333"/></svg>
<svg class="i" style="left:46px;top:307.5px" width="8" height="11" viewBox="0 0 8 11"><path d="M1.5 1 L6 5.5 L1.5 10" fill="none" stroke="#555" stroke-width="1.7"/></svg>
<svg class="i" style="left:66px;top:306.5px" width="16" height="13" viewBox="0 0 16 13"><path d="M0.6 12.4 V0.6 H5.5 L6.8 2.2 H15.4 V12.4 Z" fill="none" stroke="#555" stroke-width="1.1"/><path d="M0.6 3.5 H15.4" stroke="#555" stroke-width=".6" opacity=".5"/></svg>
<div class="t" style="left:86px;top:306.70px;font-size:13px;color:#333;font-weight:normal;font-style:normal;letter-spacing:0.03px;">Frame (5)</div>
<svg class="i" style="left:46px;top:331px" width="16" height="16" viewBox="0 0 16 16"><path d="M2 13 L11.5 2.5 L14 5 L4.5 14 L1.5 14.5 Z" fill="none" stroke="#b0b0b0" stroke-width="1"/><path d="M1 15.3 H15" stroke="#a0a8c8" stroke-width="1"/></svg>
<div class="t" style="left:66px;top:332.70px;font-size:13px;color:#9c9c9c;font-weight:normal;font-style:normal;letter-spacing:0.03px;">Gearbox Layout</div>
<svg class="i" style="left:46px;top:359.5px" width="8" height="11" viewBox="0 0 8 11"><path d="M1.5 1 L6 5.5 L1.5 10" fill="none" stroke="#555" stroke-width="1.7"/></svg>
<svg class="i" style="left:66px;top:358.5px" width="16" height="13" viewBox="0 0 16 13"><path d="M0.6 12.4 V0.6 H5.5 L6.8 2.2 H15.4 V12.4 Z" fill="none" stroke="#555" stroke-width="1.1"/><path d="M0.6 3.5 H15.4" stroke="#555" stroke-width=".6" opacity=".5"/></svg>
<div class="t" style="left:86px;top:358.70px;font-size:13px;color:#333;font-weight:normal;font-style:normal;letter-spacing:0.03px;">GB Plates (6)</div>
<svg class="i" style="left:46px;top:383px" width="16" height="16" viewBox="0 0 16 16"><circle cx="5" cy="5" r="3.8" fill="none" stroke="#bbb" stroke-width="1"/><circle cx="12" cy="12" r="2.4" fill="none" stroke="#bbb" stroke-width="1"/><path d="M2 7.5 L10 14 M7.5 2.5 L14 10" stroke="#ccc" stroke-width="1"/></svg>
<div class="t" style="left:66px;top:384.70px;font-size:13px;color:#333;font-weight:normal;font-style:normal;letter-spacing:0.03px;">Main Belt</div>
<svg class="i" style="left:197px;top:382px" width="6" height="18" viewBox="0 0 6 18"><circle cx="3" cy="9" r="3" fill="#333"/><rect x="2.2" y="0.5" width="1.6" height="1.8" fill="#333"/><rect x="2.2" y="3.5" width="1.6" height="1.8" fill="#333"/><rect x="2.2" y="12.8" width="1.6" height="1.8" fill="#333"/><rect x="2.2" y="15.8" width="1.6" height="1.8" fill="#333"/></svg>
<svg class="i" style="left:45px;top:409px" width="17" height="16" viewBox="0 0 17 16"><path d="M1 6 L15 4.5 L16.5 13 L2 15 Z" fill="#555"/><circle cx="6" cy="10" r="2.2" fill="#fff"/><circle cx="11.5" cy="9.3" r="2.2" fill="#fff"/><circle cx="6" cy="10" r="1" fill="#555"/><circle cx="11.5" cy="9.3" r="1" fill="#555"/><path d="M5 1 L6.5 4.5 M8.5 0.5 V4.5 M12 1 L10.5 4.5" stroke="#888" stroke-width=".9"/></svg>
<div class="t" style="left:66px;top:410.70px;font-size:13px;color:#333;font-weight:normal;font-style:normal;letter-spacing:0.03px;">Inter Shaft</div>
<svg class="i" style="left:197px;top:408px" width="6" height="18" viewBox="0 0 6 18"><circle cx="3" cy="9" r="3" fill="#333"/><rect x="2.2" y="0.5" width="1.6" height="1.8" fill="#333"/><rect x="2.2" y="3.5" width="1.6" height="1.8" fill="#333"/><rect x="2.2" y="12.8" width="1.6" height="1.8" fill="#333"/><rect x="2.2" y="15.8" width="1.6" height="1.8" fill="#333"/></svg>
<svg class="i" style="left:45px;top:435px" width="17" height="16" viewBox="0 0 17 16"><path d="M1 6 L15 4.5 L16.5 13 L2 15 Z" fill="#555"/><circle cx="6" cy="10" r="2.2" fill="#fff"/><circle cx="11.5" cy="9.3" r="2.2" fill="#fff"/><circle cx="6" cy="10" r="1" fill="#555"/><circle cx="11.5" cy="9.3" r="1" fill="#555"/><path d="M5 1 L6.5 4.5 M8.5 0.5 V4.5 M12 1 L10.5 4.5" stroke="#888" stroke-width=".9"/></svg>
<div class="t" style="left:66px;top:436.70px;font-size:13px;color:#333;font-weight:normal;font-style:normal;letter-spacing:0.03px;">Output Shaft</div>
<svg class="i" style="left:197px;top:434px" width="6" height="18" viewBox="0 0 6 18"><circle cx="3" cy="9" r="3" fill="#333"/><rect x="2.2" y="0.5" width="1.6" height="1.8" fill="#333"/><rect x="2.2" y="3.5" width="1.6" height="1.8" fill="#333"/><rect x="2.2" y="12.8" width="1.6" height="1.8" fill="#333"/><rect x="2.2" y="15.8" width="1.6" height="1.8" fill="#333"/></svg>
<svg class="i" style="left:46px;top:463.5px" width="8" height="11" viewBox="0 0 8 11"><path d="M1.5 1 L6 5.5 L1.5 10" fill="none" stroke="#555" stroke-width="1.7"/></svg>
<svg class="i" style="left:66px;top:462.5px" width="16" height="13" viewBox="0 0 16 13"><path d="M0.6 12.4 V0.6 H5.5 L6.8 2.2 H15.4 V12.4 Z" fill="none" stroke="#555" stroke-width="1.1"/><path d="M0.6 3.5 H15.4" stroke="#555" stroke-width=".6" opacity=".5"/></svg>
<div class="t" style="left:86px;top:462.70px;font-size:13px;color:#333;font-weight:normal;font-style:normal;letter-spacing:0.03px;">Pocketing (4)</div>
<div class="a" style="left:45px;top:492px;width:190px;height:7px;background:#ababab"></div>
<div class="a" style="left:246px;top:539px;width:32px;height:34px;background:#fff;border:1px solid #cfcfcf;border-left:none"></div>
<svg class="i" style="left:252px;top:547px" width="20" height="18" viewBox="0 0 20 18"><path d="M2 1 L4 3.5 L6 1" fill="none" stroke="#333" stroke-width="1.1"/><path d="M4 4 V16" stroke="#333" stroke-width="1.4"/><path d="M7 3 H18 M7 7.5 H18 M7 12 H18 M7 16.5 H18" stroke="#333" stroke-width="1.2"/></svg>
<div class="a" style="left:40px;top:707px;width:200px;height:1px;background:#d0d0d0"></div>
<svg class="i" style="left:44px;top:717px" width="12" height="8" viewBox="0 0 12 8"><path d="M1 1.5 L6 6 L11 1.5" fill="none" stroke="#555" stroke-width="1.7"/></svg>
<div class="t" style="left:63.5px;top:714.70px;font-size:13px;color:#333;font-weight:normal;font-style:normal;letter-spacing:0.03px;">Parts (11)</div>
<svg class="i" style="left:65px;top:739px" width="15" height="16" viewBox="0 0 15 16"><path d="M1 9 L4 7 V3 L7 1 H11 L14 3 V15 H4 L1 13 Z M4 7 H7 V11 H14 M4 7 V11 L1 9 M7 11 L4 15" fill="none" stroke="#b0b0b0" stroke-width="1"/><path d="M7 1 L10 3 V11 M4 3 H10 L14 3" fill="none" stroke="#b0b0b0" stroke-width=".9"/></svg>
<div class="t" style="left:85.5px;top:740.70px;font-size:13px;color:#a0a0a0;font-weight:normal;font-style:normal;letter-spacing:0.03px;">Origin Cube</div>
<svg class="i" style="left:65px;top:765px" width="15" height="16" viewBox="0 0 15 16"><path d="M1 9 L4 7 V3 L7 1 H11 L14 3 V15 H4 L1 13 Z M4 7 H7 V11 H14 M4 7 V11 L1 9 M7 11 L4 15" fill="none" stroke="#555" stroke-width="1"/><path d="M7 1 L10 3 V11 M4 3 H10 L14 3" fill="none" stroke="#555" stroke-width=".9"/></svg>
<div class="t" style="left:85.5px;top:766.70px;font-size:13px;color:#333;font-weight:normal;font-style:normal;letter-spacing:0.03px;">Tube 1&quot;x1&quot;x7&quot;</div>
<svg class="i" style="left:65px;top:791px" width="15" height="16" viewBox="0 0 15 16"><path d="M1 9 L4 7 V3 L7 1 H11 L14 3 V15 H4 L1 13 Z M4 7 H7 V11 H14 M4 7 V11 L1 9 M7 11 L4 15" fill="none" stroke="#555" stroke-width="1"/><path d="M7 1 L10 3 V11 M4 3 H10 L14 3" fill="none" stroke="#555" stroke-width=".9"/></svg>
<div class="t" style="left:85.5px;top:792.70px;font-size:13px;color:#333;font-weight:normal;font-style:normal;letter-spacing:0.03px;">Tube 1&quot;x1&quot;x7&quot;</div>
<svg class="i" style="left:65px;top:817px" width="15" height="16" viewBox="0 0 15 16"><path d="M1 9 L4 7 V3 L7 1 H11 L14 3 V15 H4 L1 13 Z M4 7 H7 V11 H14 M4 7 V11 L1 9 M7 11 L4 15" fill="none" stroke="#555" stroke-width="1"/><path d="M7 1 L10 3 V11 M4 3 H10 L14 3" fill="none" stroke="#555" stroke-width=".9"/></svg>
<div class="t" style="left:85.5px;top:818.70px;font-size:13px;color:#333;font-weight:normal;font-style:normal;letter-spacing:0.03px;">Tube 1&quot;x1&quot;x8&quot;</div>
<svg class="i" style="left:65px;top:843px" width="15" height="16" viewBox="0 0 15 16"><path d="M1 9 L4 7 V3 L7 1 H11 L14 3 V15 H4 L1 13 Z M4 7 H7 V11 H14 M4 7 V11 L1 9 M7 11 L4 15" fill="none" stroke="#555" stroke-width="1"/><path d="M7 1 L10 3 V11 M4 3 H10 L14 3" fill="none" stroke="#555" stroke-width=".9"/></svg>
<div class="t" style="left:85.5px;top:844.70px;font-size:13px;color:#333;font-weight:normal;font-style:normal;letter-spacing:0.03px;">Part 5</div>
<svg class="i" style="left:65px;top:869px" width="15" height="16" viewBox="0 0 15 16"><path d="M1 9 L4 7 V3 L7 1 H11 L14 3 V15 H4 L1 13 Z M4 7 H7 V11 H14 M4 7 V11 L1 9 M7 11 L4 15" fill="none" stroke="#555" stroke-width="1"/><path d="M7 1 L10 3 V11 M4 3 H10 L14 3" fill="none" stroke="#555" stroke-width=".9"/></svg>
<div class="t" style="left:85.5px;top:870.70px;font-size:13px;color:#333;font-weight:normal;font-style:normal;letter-spacing:0.03px;">Motor Plate</div>
<svg class="i" style="left:65px;top:895px" width="15" height="16" viewBox="0 0 15 16"><path d="M1 9 L4 7 V3 L7 1 H11 L14 3 V15 H4 L1 13 Z M4 7 H7 V11 H14 M4 7 V11 L1 9 M7 11 L4 15" fill="none" stroke="#555" stroke-width="1"/><path d="M7 1 L10 3 V11 M4 3 H10 L14 3" fill="none" stroke="#555" stroke-width=".9"/></svg>
<div class="t" style="left:85.5px;top:896.70px;font-size:13px;color:#333;font-weight:normal;font-style:normal;letter-spacing:0.03px;">Inner Plate</div>
<svg class="i" style="left:65px;top:921px" width="15" height="16" viewBox="0 0 15 16"><path d="M1 9 L4 7 V3 L7 1 H11 L14 3 V15 H4 L1 13 Z M4 7 H7 V11 H14 M4 7 V11 L1 9 M7 11 L4 15" fill="none" stroke="#555" stroke-width="1"/><path d="M7 1 L10 3 V11 M4 3 H10 L14 3" fill="none" stroke="#555" stroke-width=".9"/></svg>
<div class="t" style="left:85.5px;top:922.70px;font-size:13px;color:#333;font-weight:normal;font-style:normal;letter-spacing:0.03px;">1 in. Round Spacer</div>
<svg class="i" style="left:65px;top:947px" width="15" height="16" viewBox="0 0 15 16"><path d="M1 9 L4 7 V3 L7 1 H11 L14 3 V15 H4 L1 13 Z M4 7 H7 V11 H14 M4 7 V11 L1 9 M7 11 L4 15" fill="none" stroke="#555" stroke-width="1"/><path d="M7 1 L10 3 V11 M4 3 H10 L14 3" fill="none" stroke="#555" stroke-width=".9"/></svg>
<div class="t" style="left:85.5px;top:948.70px;font-size:13px;color:#333;font-weight:normal;font-style:normal;letter-spacing:0.03px;">60T HTD Belt</div>
<svg class="i" style="left:65px;top:973px" width="15" height="16" viewBox="0 0 15 16"><path d="M1 9 L4 7 V3 L7 1 H11 L14 3 V15 H4 L1 13 Z M4 7 H7 V11 H14 M4 7 V11 L1 9 M7 11 L4 15" fill="none" stroke="#555" stroke-width="1"/><path d="M7 1 L10 3 V11 M4 3 H10 L14 3" fill="none" stroke="#555" stroke-width=".9"/></svg>
<div class="t" style="left:85.5px;top:974.70px;font-size:13px;color:#333;font-weight:normal;font-style:normal;letter-spacing:0.03px;">2.187 in. Rounded Hex ...</div>
<svg class="i" style="left:65px;top:999px" width="15" height="16" viewBox="0 0 15 16"><path d="M1 9 L4 7 V3 L7 1 H11 L14 3 V15 H4 L1 13 Z M4 7 H7 V11 H14 M4 7 V11 L1 9 M7 11 L4 15" fill="none" stroke="#555" stroke-width="1"/><path d="M7 1 L10 3 V11 M4 3 H10 L14 3" fill="none" stroke="#555" stroke-width=".9"/></svg>
<div class="t" style="left:85.5px;top:1000.70px;font-size:13px;color:#333;font-weight:normal;font-style:normal;letter-spacing:0.03px;">6 in. Rounded Hex Shaft</div>
<svg class="i" style="left:10px;top:1056px" width="20" height="16" viewBox="0 0 20 16"><path d="M1 1 H15 V7 C13 5 9 5 7 8 H1 Z" fill="#222"/><circle cx="11" cy="10" r="4.3" fill="none" stroke="#222" stroke-width="1.8"/><path d="M14 13 L17.5 16.5" stroke="#222" stroke-width="2.2"/></svg>
<svg class="i" style="left:48px;top:1056px" width="16" height="16" viewBox="0 0 16 16"><path d="M8 1 V15 M1 8 H15" stroke="#666" stroke-width="2.6"/></svg>
<svg class="i" style="left:74px;top:1050px" width="570" height="29" viewBox="0 0 570 29"><path d="M0 0 H35 L42 14.5 L35 29 H0 Z" fill="#e6e6e6"/><path d="M35 0 H158 L165 14.5 L158 29 H35 L42 14.5 Z" fill="#fafafa"/><path d="M42 14.5 L35 0 M42 14.5 L35 29" stroke="#d0d0d0" stroke-width="1" fill="none"/><path d="M162 0 H362 V29 H162 L169 14.5 Z" fill="#ececec"/></svg>
<svg class="i" style="left:82px;top:1054px" width="18" height="17" viewBox="0 0 18 17"><path d="M9 1 L17 9 H15 V16 H11 V11 H7 V16 H3 V9 H1 Z" fill="#666"/><rect x="12" y="2" width="2.5" height="5" fill="#666"/></svg>
<svg class="i" style="left:125px;top:1055px" width="19" height="15" viewBox="0 0 19 15"><path d="M0.6 14.4 V0.6 H6.5 L8 2.5 H18.4 V14.4 Z" fill="none" stroke="#555" stroke-width="1.2"/><path d="M0.6 4 H18.4" stroke="#555" stroke-width=".6" opacity=".4"/></svg>
<div class="t" style="left:150px;top:1057.45px;font-size:14px;color:#555;font-weight:normal;font-style:normal;">Exercise 3</div>
<svg class="i" style="left:249px;top:1056px" width="14" height="14" viewBox="0 0 14 14"><circle cx="7" cy="7" r="6.5" fill="#6e98d8"/><path d="M7 2 L9.5 5 H4.5Z M7 12 L9.5 9 H4.5Z" fill="#fff"/><rect x="5" y="5" width="4" height="4" fill="#fff"/></svg>
<svg class="i" style="left:266px;top:1055px" width="18" height="17" viewBox="0 0 18 17"><path d="M1 4 L5 1 H17 V13 L13 16 H1 Z" fill="#fff" stroke="#444" stroke-width="1.1"/><path d="M1 4 H13 V16 M13 4 L17 1" fill="none" stroke="#444" stroke-width="1.1"/><rect x="4" y="6" width="7" height="8" fill="#888"/></svg>
<div class="t" style="left:289px;top:1057.95px;font-size:14px;color:#555;font-weight:normal;font-style:normal;">Exercise 3 Assembly</div>
<div class="a" style="left:438px;top:1050px;width:200px;height:29px;background:#fff"></div>
<div class="a" style="left:440px;top:1075px;width:195px;height:2px;background:#1f55b3;border-radius:1px"></div>
<svg class="i" style="left:450px;top:1054px" width="18" height="18" viewBox="0 0 18 18"><path d="M1 5 L3 3 H7 V17 H1 Z M7 5 V17 M9 17 V3 L11 1 H16 V17 Z M11 3 H16" fill="#fff" stroke="#444" stroke-width="1.1"/><path d="M1 5 H5 V17" fill="none" stroke="#444" stroke-width="1"/></svg>
<div class="t" style="left:471px;top:1058.12px;font-size:13.8px;color:#333;font-weight:normal;font-style:normal;">Exercise 3 Part Studio</div>
<svg class="i" style="left:0;top:0" width="1919" height="1079" viewBox="0 0 1919 1079"><defs><linearGradient id="dg1" gradientUnits="userSpaceOnUse" x1="860" y1="255" x2="1150" y2="590"><stop offset="0" stop-color="#2d7031"/><stop offset=".5" stop-color="#235c27"/><stop offset="1" stop-color="#1f5423"/></linearGradient></defs><polygon points="878.0,246.0 846.0,271.0 1146.0,611.0 1170.0,575.0" fill="url(#dg1)" stroke="#0f2a10" stroke-width="1.2" stroke-linejoin="round" /><polygon points="904.0,220.0 878.0,246.0 1170.0,575.0 1197.0,552.0" fill="#50b450" stroke="#0f2a10" stroke-width="1.2" stroke-linejoin="round" /><g transform="translate(907.6,251.4) rotate(40)"><ellipse rx="4.5" ry="3.6" fill="#0f1f10" stroke="#0a160a" stroke-width=".8"/><ellipse cx=".8" cy=".6" rx="2.48" ry="1.44" fill="#cfe6cf"/></g><g transform="translate(926.0,272.2) rotate(40)"><ellipse rx="4.5" ry="3.6" fill="#0f1f10" stroke="#0a160a" stroke-width=".8"/><ellipse cx=".8" cy=".6" rx="2.48" ry="1.44" fill="#cfe6cf"/></g><g transform="translate(944.4,293.0) rotate(40)"><ellipse rx="4.5" ry="3.6" fill="#0f1f10" stroke="#0a160a" stroke-width=".8"/><ellipse cx=".8" cy=".6" rx="2.48" ry="1.44" fill="#cfe6cf"/></g><g transform="translate(962.8,313.8) rotate(40)"><ellipse rx="4.5" ry="3.6" fill="#0f1f10" stroke="#0a160a" stroke-width=".8"/><ellipse cx=".8" cy=".6" rx="2.48" ry="1.44" fill="#cfe6cf"/></g><g transform="translate(981.2,334.6) rotate(40)"><ellipse rx="4.5" ry="3.6" fill="#0f1f10" stroke="#0a160a" stroke-width=".8"/><ellipse cx=".8" cy=".6" rx="2.48" ry="1.44" fill="#cfe6cf"/></g><g transform="translate(999.6,355.4) rotate(40)"><ellipse rx="4.5" ry="3.6" fill="#0f1f10" stroke="#0a160a" stroke-width=".8"/><ellipse cx=".8" cy=".6" rx="2.48" ry="1.44" fill="#cfe6cf"/></g><g transform="translate(1018.0,376.2) rotate(40)"><ellipse rx="4.5" ry="3.6" fill="#0f1f10" stroke="#0a160a" stroke-width=".8"/><ellipse cx=".8" cy=".6" rx="2.48" ry="1.44" fill="#cfe6cf"/></g><g transform="translate(1036.4,397.0) rotate(40)"><ellipse rx="4.5" ry="3.6" fill="#0f1f10" stroke="#0a160a" stroke-width=".8"/><ellipse cx=".8" cy=".6" rx="2.48" ry="1.44" fill="#cfe6cf"/></g><g transform="translate(1054.8,417.8) rotate(40)"><ellipse rx="4.5" ry="3.6" fill="#0f1f10" stroke="#0a160a" stroke-width=".8"/><ellipse cx=".8" cy=".6" rx="2.48" ry="1.44" fill="#cfe6cf"/></g><g transform="translate(1073.2,438.6) rotate(40)"><ellipse rx="4.5" ry="3.6" fill="#0f1f10" stroke="#0a160a" stroke-width=".8"/><ellipse cx=".8" cy=".6" rx="2.48" ry="1.44" fill="#cfe6cf"/></g><g transform="translate(1091.6,459.4) rotate(40)"><ellipse rx="4.5" ry="3.6" fill="#0f1f10" stroke="#0a160a" stroke-width=".8"/><ellipse cx=".8" cy=".6" rx="2.48" ry="1.44" fill="#cfe6cf"/></g><g transform="translate(1110.0,480.2) rotate(40)"><ellipse rx="4.5" ry="3.6" fill="#0f1f10" stroke="#0a160a" stroke-width=".8"/><ellipse cx=".8" cy=".6" rx="2.48" ry="1.44" fill="#cfe6cf"/></g><g transform="translate(1128.4,501.0) rotate(40)"><ellipse rx="4.5" ry="3.6" fill="#0f1f10" stroke="#0a160a" stroke-width=".8"/><ellipse cx=".8" cy=".6" rx="2.48" ry="1.44" fill="#cfe6cf"/></g><g transform="translate(1146.8,521.8) rotate(40)"><ellipse rx="4.5" ry="3.6" fill="#0f1f10" stroke="#0a160a" stroke-width=".8"/><ellipse cx=".8" cy=".6" rx="2.48" ry="1.44" fill="#cfe6cf"/></g><g transform="translate(1165.2,542.6) rotate(40)"><ellipse rx="4.5" ry="3.6" fill="#0f1f10" stroke="#0a160a" stroke-width=".8"/><ellipse cx=".8" cy=".6" rx="2.48" ry="1.44" fill="#cfe6cf"/></g><g transform="translate(879.2,279.0) rotate(40)"><ellipse rx="4.5" ry="3.6" fill="#0f1f10" stroke="#0a160a" stroke-width=".8"/><ellipse cx=".8" cy=".6" rx="2.48" ry="1.44" fill="#cfe6cf"/></g><g transform="translate(897.6,299.8) rotate(40)"><ellipse rx="4.5" ry="3.6" fill="#0f1f10" stroke="#0a160a" stroke-width=".8"/><ellipse cx=".8" cy=".6" rx="2.48" ry="1.44" fill="#cfe6cf"/></g><g transform="translate(916.0,320.6) rotate(40)"><ellipse rx="4.5" ry="3.6" fill="#0f1f10" stroke="#0a160a" stroke-width=".8"/><ellipse cx=".8" cy=".6" rx="2.48" ry="1.44" fill="#cfe6cf"/></g><g transform="translate(934.4,341.4) rotate(40)"><ellipse rx="4.5" ry="3.6" fill="#0f1f10" stroke="#0a160a" stroke-width=".8"/><ellipse cx=".8" cy=".6" rx="2.48" ry="1.44" fill="#cfe6cf"/></g><g transform="translate(952.8,362.2) rotate(40)"><ellipse rx="4.5" ry="3.6" fill="#0f1f10" stroke="#0a160a" stroke-width=".8"/><ellipse cx=".8" cy=".6" rx="2.48" ry="1.44" fill="#cfe6cf"/></g><g transform="translate(971.2,383.0) rotate(40)"><ellipse rx="4.5" ry="3.6" fill="#0f1f10" stroke="#0a160a" stroke-width=".8"/><ellipse cx=".8" cy=".6" rx="2.48" ry="1.44" fill="#cfe6cf"/></g><g transform="translate(989.6,403.8) rotate(40)"><ellipse rx="4.5" ry="3.6" fill="#0f1f10" stroke="#0a160a" stroke-width=".8"/><ellipse cx=".8" cy=".6" rx="2.48" ry="1.44" fill="#cfe6cf"/></g><g transform="translate(1008.0,424.6) rotate(40)"><ellipse rx="4.5" ry="3.6" fill="#0f1f10" stroke="#0a160a" stroke-width=".8"/><ellipse cx=".8" cy=".6" rx="2.48" ry="1.44" fill="#cfe6cf"/></g><polygon points="1170.0,574.2 1197.5,551.3 1203.0,552.0 1213.4,566.0 1213.4,572.0 1200.0,584.0 1185.0,592.0 1160.0,592.0 1155.8,587.5" fill="#2a2a2a" stroke="#111" stroke-width="1" stroke-linejoin="round" /><path d="M1196 560 L1211 570" stroke="#111" stroke-width="1"/><path d="M1199 580 L1212 572" stroke="#111" stroke-width="1"/><polygon points="1177.0,571.0 1184.0,565.0 1203.4,597.0 1196.0,600.0" fill="#8a8a8a" stroke="#111" stroke-width="0.8" stroke-linejoin="round" /><polygon points="1184.0,565.0 1191.0,560.0 1210.0,592.0 1203.4,597.0" fill="#d6d6d6" stroke="#111" stroke-width="0.8" stroke-linejoin="round" /><polygon points="1139.0,608.5 1186.0,621.5 1186.0,1005.0 1139.0,990.0" fill="#2d6f30" stroke="#0f2a10" stroke-width="1.2" stroke-linejoin="round" /><polygon points="1186.0,621.5 1214.0,599.0 1214.0,982.0 1186.0,1005.0" fill="#43a046" stroke="#0f2a10" stroke-width="1.2" stroke-linejoin="round" /><polygon points="1139.0,608.5 1167.0,586.0 1214.0,599.0 1186.0,621.5" fill="#3b8f3e" stroke="#0f2a10" stroke-width="1.2" stroke-linejoin="round" /><polygon points="1143.0,608.5 1167.0,589.0 1209.0,600.0 1186.0,618.5" fill="#245a26" stroke="#1a3a1b" stroke-width="1" stroke-linejoin="round" /><g transform="translate(1200.7,633.0) rotate(12)"><ellipse rx="3" ry="5.6" fill="#1d4a20" stroke="#0a160a" stroke-width="1"/><ellipse cx="-.6" cy=".8" rx="1.3" ry="3.4" fill="#4f8f50"/></g><g transform="translate(1200.7,656.9) rotate(12)"><ellipse rx="3" ry="5.6" fill="#1d4a20" stroke="#0a160a" stroke-width="1"/><ellipse cx="-.6" cy=".8" rx="1.3" ry="3.4" fill="#4f8f50"/></g><g transform="translate(1200.7,680.8) rotate(12)"><ellipse rx="3" ry="5.6" fill="#1d4a20" stroke="#0a160a" stroke-width="1"/><ellipse cx="-.6" cy=".8" rx="1.3" ry="3.4" fill="#4f8f50"/></g><g transform="translate(1200.7,704.7) rotate(12)"><ellipse rx="3" ry="5.6" fill="#1d4a20" stroke="#0a160a" stroke-width="1"/><ellipse cx="-.6" cy=".8" rx="1.3" ry="3.4" fill="#4f8f50"/></g><g transform="translate(1200.7,728.6) rotate(12)"><ellipse rx="3" ry="5.6" fill="#1d4a20" stroke="#0a160a" stroke-width="1"/><ellipse cx="-.6" cy=".8" rx="1.3" ry="3.4" fill="#4f8f50"/></g><g transform="translate(1200.7,752.5) rotate(12)"><ellipse rx="3" ry="5.6" fill="#1d4a20" stroke="#0a160a" stroke-width="1"/><ellipse cx="-.6" cy=".8" rx="1.3" ry="3.4" fill="#4f8f50"/></g><g transform="translate(1200.7,776.4) rotate(12)"><ellipse rx="3" ry="5.6" fill="#1d4a20" stroke="#0a160a" stroke-width="1"/><ellipse cx="-.6" cy=".8" rx="1.3" ry="3.4" fill="#4f8f50"/></g><g transform="translate(1200.7,800.3) rotate(12)"><ellipse rx="3" ry="5.6" fill="#1d4a20" stroke="#0a160a" stroke-width="1"/><ellipse cx="-.6" cy=".8" rx="1.3" ry="3.4" fill="#4f8f50"/></g><g transform="translate(1200.7,824.2) rotate(12)"><ellipse rx="3" ry="5.6" fill="#1d4a20" stroke="#0a160a" stroke-width="1"/><ellipse cx="-.6" cy=".8" rx="1.3" ry="3.4" fill="#4f8f50"/></g><g transform="translate(1200.7,848.1) rotate(12)"><ellipse rx="3" ry="5.6" fill="#1d4a20" stroke="#0a160a" stroke-width="1"/><ellipse cx="-.6" cy=".8" rx="1.3" ry="3.4" fill="#4f8f50"/></g><g transform="translate(1200.7,872.0) rotate(12)"><ellipse rx="3" ry="5.6" fill="#1d4a20" stroke="#0a160a" stroke-width="1"/><ellipse cx="-.6" cy=".8" rx="1.3" ry="3.4" fill="#4f8f50"/></g><g transform="translate(1200.7,895.9) rotate(12)"><ellipse rx="3" ry="5.6" fill="#1d4a20" stroke="#0a160a" stroke-width="1"/><ellipse cx="-.6" cy=".8" rx="1.3" ry="3.4" fill="#4f8f50"/></g><g transform="translate(1200.7,919.8) rotate(12)"><ellipse rx="3" ry="5.6" fill="#1d4a20" stroke="#0a160a" stroke-width="1"/><ellipse cx="-.6" cy=".8" rx="1.3" ry="3.4" fill="#4f8f50"/></g><polygon points="852.0,860.0 1187.0,956.1 1187.0,1005.4 852.0,909.0" fill="#2d6b30" stroke="#0f2a10" stroke-width="1.2" stroke-linejoin="round" /><polygon points="880.0,837.5 1214.0,933.4 1214.5,935.0 1187.0,956.1 852.0,860.0" fill="#45a147" stroke="#0f2a10" stroke-width="1.2" stroke-linejoin="round" /><polygon points="1139.0,911.8 1186.0,925.0 1186.0,957.0 1139.0,943.0" fill="#2d6f30" stroke="none" stroke-width="0" stroke-linejoin="round" /><polygon points="1139.0,600.0 1139.0,912.0 1186.0,957.0 1186.0,621.5" fill="#2d6f30" stroke="none" stroke-width="0" stroke-linejoin="round" /><path d="M1139 608.5 V912" stroke="#0f2a10" stroke-width="1.2"/><polygon points="1187.0,957.0 1214.5,935.0 1214.5,982.0 1187.0,1005.4" fill="#2a6a2d" stroke="#0f2a10" stroke-width="1.2" stroke-linejoin="round" /><polygon points="1189.5,959.5 1212.0,941.0 1212.0,980.0 1189.5,1001.0" fill="#1f5221" stroke="#123012" stroke-width="0.8" stroke-linejoin="round" /><polygon points="1189.5,985.0 1212.0,968.0 1212.0,980.0 1189.5,1001.0" fill="#3f9a42" stroke="#123012" stroke-width="0.6" stroke-linejoin="round" /><g transform="translate(889.7,855.6) rotate(12)"><ellipse rx="5.2" ry="3.2" fill="#1d4a20" stroke="#0a160a" stroke-width=".9"/><ellipse cx="0.5" cy="0.8" rx="3.2" ry="1.6" fill="#2f6a31"/></g><g transform="translate(913.7,862.6) rotate(12)"><ellipse rx="5.2" ry="3.2" fill="#1d4a20" stroke="#0a160a" stroke-width=".9"/><ellipse cx="0.5" cy="0.8" rx="3.2" ry="1.6" fill="#2f6a31"/></g><g transform="translate(937.7,869.6) rotate(12)"><ellipse rx="5.2" ry="3.2" fill="#1d4a20" stroke="#0a160a" stroke-width=".9"/><ellipse cx="0.5" cy="0.8" rx="3.2" ry="1.6" fill="#2f6a31"/></g><g transform="translate(961.7,876.6) rotate(12)"><ellipse rx="5.2" ry="3.2" fill="#1d4a20" stroke="#0a160a" stroke-width=".9"/><ellipse cx="0.5" cy="0.8" rx="3.2" ry="1.6" fill="#2f6a31"/></g><g transform="translate(985.7,883.6) rotate(12)"><ellipse rx="5.2" ry="3.2" fill="#1d4a20" stroke="#0a160a" stroke-width=".9"/><ellipse cx="0.5" cy="0.8" rx="3.2" ry="1.6" fill="#2f6a31"/></g><g transform="translate(1009.7,890.6) rotate(12)"><ellipse rx="5.2" ry="3.2" fill="#1d4a20" stroke="#0a160a" stroke-width=".9"/><ellipse cx="0.5" cy="0.8" rx="3.2" ry="1.6" fill="#2f6a31"/></g><g transform="translate(1033.7,897.6) rotate(12)"><ellipse rx="5.2" ry="3.2" fill="#1d4a20" stroke="#0a160a" stroke-width=".9"/><ellipse cx="0.5" cy="0.8" rx="3.2" ry="1.6" fill="#2f6a31"/></g><g transform="translate(1057.7,904.6) rotate(12)"><ellipse rx="5.2" ry="3.2" fill="#1d4a20" stroke="#0a160a" stroke-width=".9"/><ellipse cx="0.5" cy="0.8" rx="3.2" ry="1.6" fill="#2f6a31"/></g><g transform="translate(876.0,892.3) rotate(-30)"><ellipse rx="4" ry="3.4" fill="#3a8a3c" stroke="#0a160a" stroke-width=".8"/><ellipse cx="-.5" cy=".8" rx="2.6" ry="2" fill="#5fae5f"/></g><g transform="translate(899.9,899.0) rotate(-30)"><ellipse rx="4" ry="3.4" fill="#3a8a3c" stroke="#0a160a" stroke-width=".8"/><ellipse cx="-.5" cy=".8" rx="2.6" ry="2" fill="#5fae5f"/></g><g transform="translate(923.8,905.7) rotate(-30)"><ellipse rx="4" ry="3.4" fill="#3a8a3c" stroke="#0a160a" stroke-width=".8"/><ellipse cx="-.5" cy=".8" rx="2.6" ry="2" fill="#5fae5f"/></g><g transform="translate(947.7,912.4) rotate(-30)"><ellipse rx="4" ry="3.4" fill="#3a8a3c" stroke="#0a160a" stroke-width=".8"/><ellipse cx="-.5" cy=".8" rx="2.6" ry="2" fill="#5fae5f"/></g><g transform="translate(971.6,919.1) rotate(-30)"><ellipse rx="4" ry="3.4" fill="#3a8a3c" stroke="#0a160a" stroke-width=".8"/><ellipse cx="-.5" cy=".8" rx="2.6" ry="2" fill="#5fae5f"/></g><g transform="translate(995.5,925.8) rotate(-30)"><ellipse rx="4" ry="3.4" fill="#3a8a3c" stroke="#0a160a" stroke-width=".8"/><ellipse cx="-.5" cy=".8" rx="2.6" ry="2" fill="#5fae5f"/></g><g transform="translate(1019.4,932.5) rotate(-30)"><ellipse rx="4" ry="3.4" fill="#3a8a3c" stroke="#0a160a" stroke-width=".8"/><ellipse cx="-.5" cy=".8" rx="2.6" ry="2" fill="#5fae5f"/></g><g transform="translate(1043.3,939.2) rotate(-30)"><ellipse rx="4" ry="3.4" fill="#3a8a3c" stroke="#0a160a" stroke-width=".8"/><ellipse cx="-.5" cy=".8" rx="2.6" ry="2" fill="#5fae5f"/></g><g transform="translate(1067.2,945.9) rotate(-30)"><ellipse rx="4" ry="3.4" fill="#3a8a3c" stroke="#0a160a" stroke-width=".8"/><ellipse cx="-.5" cy=".8" rx="2.6" ry="2" fill="#5fae5f"/></g><ellipse cx="1162.5" cy="783" rx="4" ry="5" fill="#3f8a40" stroke="#0a160a" stroke-width=".8"/><ellipse cx="1163.5" cy="784" rx="2.5" ry="3" fill="#5aa85a"/><ellipse cx="1162.5" cy="806" rx="4" ry="5" fill="#3f8a40" stroke="#0a160a" stroke-width=".8"/><ellipse cx="1163.5" cy="807" rx="2.5" ry="3" fill="#5aa85a"/><polygon points="881.3,462.3 884.9,442.2 891.4,437.2 887.8,457.3" fill="#d9d9d9" stroke="#d9d9d9" stroke-width="0.5" stroke-linejoin="round" /><polygon points="884.9,442.2 893.8,430.0 900.3,425.0 891.4,437.2" fill="#d9d9d9" stroke="#d9d9d9" stroke-width="0.5" stroke-linejoin="round" /><polygon points="893.8,430.0 904.9,421.1 911.4,416.1 900.3,425.0" fill="#d9d9d9" stroke="#d9d9d9" stroke-width="0.5" stroke-linejoin="round" /><polygon points="904.9,421.1 920.0,418.0 926.5,413.0 911.4,416.1" fill="#d9d9d9" stroke="#d9d9d9" stroke-width="0.5" stroke-linejoin="round" /><polygon points="920.0,418.0 940.0,417.5 946.5,412.5 926.5,413.0" fill="#d9d9d9" stroke="#d9d9d9" stroke-width="0.5" stroke-linejoin="round" /><polygon points="940.0,417.5 1027.0,441.5 1033.5,436.5 946.5,412.5" fill="#d9d9d9" stroke="#d9d9d9" stroke-width="0.5" stroke-linejoin="round" /><polygon points="1027.0,441.5 1139.0,565.0 1145.5,560.0 1033.5,436.5" fill="#d9d9d9" stroke="#d9d9d9" stroke-width="0.5" stroke-linejoin="round" /><polygon points="1139.0,565.0 1143.0,576.0 1149.5,571.0 1145.5,560.0" fill="#d9d9d9" stroke="#d9d9d9" stroke-width="0.5" stroke-linejoin="round" /><polygon points="1143.0,576.0 1159.0,620.0 1165.5,615.0 1149.5,571.0" fill="#d9d9d9" stroke="#d9d9d9" stroke-width="0.5" stroke-linejoin="round" /><polygon points="1159.0,620.0 1167.4,640.0 1173.9,635.0 1165.5,615.0" fill="#d9d9d9" stroke="#d9d9d9" stroke-width="0.5" stroke-linejoin="round" /><polygon points="1167.4,640.0 1167.4,773.0 1173.9,768.0 1173.9,635.0" fill="#d9d9d9" stroke="#d9d9d9" stroke-width="0.5" stroke-linejoin="round" /><polygon points="1167.4,773.0 1161.0,779.0 1167.5,774.0 1173.9,768.0" fill="#d9d9d9" stroke="#d9d9d9" stroke-width="0.5" stroke-linejoin="round" /><polygon points="1161.0,779.0 1036.0,748.0 1042.5,743.0 1167.5,774.0" fill="#d9d9d9" stroke="#d9d9d9" stroke-width="0.5" stroke-linejoin="round" /><polygon points="1036.0,748.0 1024.0,743.0 1030.5,738.0 1042.5,743.0" fill="#d9d9d9" stroke="#d9d9d9" stroke-width="0.5" stroke-linejoin="round" /><polygon points="1024.0,743.0 1013.0,735.0 1019.5,730.0 1030.5,738.0" fill="#d9d9d9" stroke="#d9d9d9" stroke-width="0.5" stroke-linejoin="round" /><polygon points="1013.0,735.0 1004.0,720.0 1010.5,715.0 1019.5,730.0" fill="#d9d9d9" stroke="#d9d9d9" stroke-width="0.5" stroke-linejoin="round" /><polygon points="1004.0,720.0 964.1,640.0 970.6,635.0 1010.5,715.0" fill="#d9d9d9" stroke="#d9d9d9" stroke-width="0.5" stroke-linejoin="round" /><polygon points="964.1,640.0 923.4,560.0 929.9,555.0 970.6,635.0" fill="#d9d9d9" stroke="#d9d9d9" stroke-width="0.5" stroke-linejoin="round" /><polygon points="923.4,560.0 892.2,500.0 898.7,495.0 929.9,555.0" fill="#d9d9d9" stroke="#d9d9d9" stroke-width="0.5" stroke-linejoin="round" /><polygon points="892.2,500.0 886.5,490.0 893.0,485.0 898.7,495.0" fill="#d9d9d9" stroke="#d9d9d9" stroke-width="0.5" stroke-linejoin="round" /><polygon points="886.5,490.0 882.7,480.0 889.2,475.0 893.0,485.0" fill="#d9d9d9" stroke="#d9d9d9" stroke-width="0.5" stroke-linejoin="round" /><polygon points="882.7,480.0 881.3,462.3 887.8,457.3 889.2,475.0" fill="#d9d9d9" stroke="#d9d9d9" stroke-width="0.5" stroke-linejoin="round" /><polygon points="887.8,457.3 891.4,437.2 900.3,425.0 911.4,416.1 926.5,413.0 946.5,412.5 1033.5,436.5 1145.5,560.0 1149.5,571.0 1165.5,615.0 1173.9,635.0 1173.9,768.0 1167.5,774.0 1042.5,743.0 1030.5,738.0 1019.5,730.0 1010.5,715.0 970.6,635.0 929.9,555.0 898.7,495.0 893.0,485.0 889.2,475.0" fill="none" stroke="#1a1a1a" stroke-width="1" stroke-linejoin="round" /><path d="M881.3 462.3 L884.9 442.2 L893.8 430.0 L904.9 421.1 L920.0 418.0 L940.0 417.5 L1027.0 441.5 L1139.0 565.0 L1143.0 576.0 L1159.0 620.0 L1167.4 640.0 L1167.4 773.0 L1161.0 779.0 L1036.0 748.0 L1024.0 743.0 L1013.0 735.0 L1004.0 720.0 L964.1 640.0 L923.4 560.0 L892.2 500.0 L886.5 490.0 L882.7 480.0 Z M907 477.5 a35 35 0 1 0 70 0 a35 35 0 1 0 -70 0 Z M962.2 436.7 L968.9 435.6 L997.8 442.8 L1004.5 448.9 L1003.4 455.6 L994.5 463.4 L983.4 462.3 L964.5 445.6 Z M1001.2 472.3 L1012.3 465.6 L1019.0 467.8 L1025.6 495.6 L1016.7 503.4 L992.3 505.6 L986.7 497.9 L994.5 491.2 L1003.4 482.3 Z M1031.0 471.0 L1038.0 469.6 L1116.4 558.8 L1114.0 573.0 L1090.0 566.0 L1062.0 563.0 Z M947.4 525.3 L956.6 521.9 L970.4 549.5 L964.6 556.4 Z M965.1 525.9 L976.6 520.1 L1004.2 562.6 L999.6 571.9 L989.3 569.5 Z M957.4 548.8 L966.6 544.2 L1027.5 583.3 L1031.0 593.7 L1019.5 596.0 Z M990.0 534.0 L1000.4 527.1 L1054.5 578.9 L1053.3 591.5 L1041.8 590.4 Z M930.3 555.0 L940.6 548.1 L979.7 602.1 L977.4 612.5 L965.9 611.3 Z M967.7 621.5 L979.2 613.5 L1011.4 673.3 L1009.1 685.9 L997.6 684.8 Z M1002.4 595.9 L1011.6 591.3 L1026.6 605.1 L1025.4 615.4 L1007.0 614.3 Z M1005.1 519.6 L1028.2 511.6 L1043.1 541.5 L1031.6 547.2 Z M1040 612.6 a15 15 0 1 0 30 0 a15 15 0 1 0 -30 0 Z M1009.5 706.5 a28 28 0 1 0 56 0 a28 28 0 1 0 -56 0 Z M1073.0 716.0 L1126.0 728.0 L1143.0 757.0 L1140.0 761.0 L1078.0 740.0 L1071.0 730.0 Z M1114.0 652.0 L1150.0 645.0 L1157.0 660.0 L1157.0 742.0 L1150.0 745.0 L1106.0 666.0 Z M1109.0 587.0 L1127.0 586.0 L1140.0 590.0 L1150.0 620.0 L1147.0 630.0 L1124.0 617.0 L1109.0 617.0 Z M1082.0 566.0 L1100.0 567.0 L1113.0 575.0 L1108.0 583.0 L1088.0 585.0 L1080.0 578.0 Z M1112.0 626.0 L1146.0 630.0 L1151.0 637.0 L1140.0 642.0 L1115.0 637.0 Z M1040.0 596.0 L1090.0 596.0 L1100.0 600.0 L1080.0 610.0 L1044.0 612.0 Z" fill="#7f7f7f" fill-rule="evenodd" stroke="#161616" stroke-width="1"/><path d="M908 478 C908 460 920 446 937 443 C927 451 917 463 916 479 C916 490 920 499 927 506 C915 500 908 490 908 478 Z" fill="#dedede" stroke="#222" stroke-width="0.8" stroke-linejoin="round" /><path d="M962.5 437 L969 436 L987 458 L994 463 L983.4 462.3 L964.5 445.6 Z" fill="#dedede" stroke="#222" stroke-width="0.7" stroke-linejoin="round" /><path d="M992.3 505.6 C1003 500 1015 497 1025 494 L1025.6 495.6 L1016.7 503.4 Z" fill="#dedede" stroke="#222" stroke-width="0.7" stroke-linejoin="round" /><path d="M1001.2 472.3 L1006 470 L1000 490 L994.5 491.2 Z" fill="#dedede" stroke="#222" stroke-width="0.7" stroke-linejoin="round" /><polygon points="1030.8,470.8 1038.0,469.6 1062.2,563.6 1056.0,563.6" fill="#dedede" stroke="#222" stroke-width="0.7" stroke-linejoin="round" /><polygon points="1047.0,500.0 1053.0,498.0 1084.0,550.0 1083.0,557.0 1077.0,556.0" fill="#dedede" stroke="#222" stroke-width="0.7" stroke-linejoin="round" /><polygon points="966.0,529.0 969.0,527.0 993.0,569.0 990.0,569.0" fill="#dedede" stroke="#222" stroke-width="0.7" stroke-linejoin="round" /><polygon points="961.0,552.0 964.0,550.0 1022.0,594.0 1019.0,595.0" fill="#dedede" stroke="#222" stroke-width="0.7" stroke-linejoin="round" /><polygon points="993.0,538.0 996.0,535.0 1045.0,589.0 1042.0,589.0" fill="#dedede" stroke="#222" stroke-width="0.7" stroke-linejoin="round" /><polygon points="932.0,559.0 935.0,556.0 969.0,610.0 966.0,610.0" fill="#dedede" stroke="#222" stroke-width="0.7" stroke-linejoin="round" /><polygon points="969.0,626.0 972.0,623.0 1001.0,683.0 998.0,683.0" fill="#dedede" stroke="#222" stroke-width="0.7" stroke-linejoin="round" /><polygon points="1004.0,597.0 1008.0,595.0 1020.0,613.0 1008.0,613.0" fill="#dedede" stroke="#222" stroke-width="0.7" stroke-linejoin="round" /><path d="M1011 708 C1011 692 1022 681 1037 679 C1028 686 1020 697 1020 710 C1020 719 1024 727 1030 733 C1018 729 1011 720 1011 708 Z" fill="#dedede" stroke="#222" stroke-width="0.8" stroke-linejoin="round" /><polygon points="1075.0,737.0 1140.0,756.0 1140.0,761.0 1076.0,742.0" fill="#dedede" stroke="#222" stroke-width="0.7" stroke-linejoin="round" /><polygon points="1103.0,662.0 1110.0,660.0 1157.0,735.0 1155.0,745.0 1150.0,745.0" fill="#dedede" stroke="#222" stroke-width="0.7" stroke-linejoin="round" /><path d="M1068 695 C1075 700 1078 712 1075 725 L1069 728 C1072 716 1070 703 1066 697 Z" fill="#dedede" stroke="#222" stroke-width="0.7" stroke-linejoin="round" /><circle cx="904.5" cy="437" r="4.6" fill="#d2d2d2" stroke="#161616" stroke-width="1"/><circle cx="1018.8" cy="449.7" r="4.6" fill="#d2d2d2" stroke="#161616" stroke-width="1"/><circle cx="986.4" cy="477" r="4.6" fill="#d2d2d2" stroke="#161616" stroke-width="1"/><circle cx="922" cy="540" r="4.6" fill="#d2d2d2" stroke="#161616" stroke-width="1"/><circle cx="960.3" cy="613" r="4.6" fill="#d2d2d2" stroke="#161616" stroke-width="1"/><circle cx="1128.7" cy="573.8" r="4.6" fill="#d2d2d2" stroke="#161616" stroke-width="1"/><circle cx="1156" cy="645.5" r="4.6" fill="#d2d2d2" stroke="#161616" stroke-width="1"/><circle cx="1156" cy="765" r="4.6" fill="#d2d2d2" stroke="#161616" stroke-width="1"/><path d="M944 505 C950 499 960 498 966 502 L962 510 C956 512 949 511 944 505 Z" fill="#3aa33a" stroke="none" stroke-width="0" stroke-linejoin="round" /><path d="M1036 632 L1108 576 L1124 596 L1056 650 Z" fill="#262626" stroke="#0c0c0c" stroke-width="1" stroke-linejoin="round" /><path d="M1045 628 L1110 579 L1116 586 L1052 636 Z" fill="#3a3a3a" stroke="none" stroke-width="0" stroke-linejoin="round" /><path d="M1026 700 L1062 680 L1070 698 L1042 716 Z" fill="#262626" stroke="#0c0c0c" stroke-width="1" stroke-linejoin="round" /><polygon points="1061.0,669.0 1086.0,655.0 1095.0,668.0 1071.0,682.0" fill="#2a2a2a" stroke="#111" stroke-width="0.8" stroke-linejoin="round" /><path d="M1040 600 C1046 592 1060 590 1068 596 L1062 604 C1056 600 1048 601 1044 606 Z" fill="#dcdcdc" stroke="#222" stroke-width="0.7" stroke-linejoin="round" /><polygon points="1079.0,686.0 1097.0,680.0 1099.0,690.0 1083.0,697.0" fill="#f4f4f4" stroke="#222" stroke-width="0.7" stroke-linejoin="round" /><path d="M906 486 C904 470 915 459 932 461 C950 470 1000 510 1080 579 C1100 596 1119 615 1118 643 C1117 670 1092 694 1064 694 C1045 694 1030 684 1020 668 Z M913 489 C913 481 921 476 934 479 Q1000 550 1074 602 C1090 612 1104 622 1104 641 C1103 662 1084 681 1063 681 C1049 681 1033 674 1023 664 Z" fill="#3b3b3b" fill-rule="evenodd" stroke="none"/><path d="M906 486 C904 470 915 459 932 461 C950 470 1000 510 1080 579 C1100 596 1119 615 1118 643 C1117 670 1092 694 1064 694 C1045 694 1030 684 1020 668 Z" fill="none" stroke="#141414" stroke-width="1.5"/><path d="M913 489 C913 481 921 476 934 479 Q1000 550 1074 602 C1090 612 1104 622 1104 641 C1103 662 1084 681 1063 681 C1049 681 1033 674 1023 664 Z" fill="none" stroke="#141414" stroke-width="1.5"/><path d="M1108 608 C1118 625 1118 650 1100 672 C1088 688 1075 694 1060 694 C1045 694 1030 684 1020 668" fill="none" stroke="#141414" stroke-width="5"/><path d="M1016 668 L909 488 C903 476 910 465 924 467 C932 469 936 473 940 476" fill="none" stroke="#151515" stroke-width="8.5"/><path d="M932 475 L1076 595.5" fill="none" stroke="#151515" stroke-width="12"/><polygon points="1060.2,643.8 1050.7,651.8 1038.9,647.5 1036.8,635.2 1046.3,627.2 1058.1,631.5" fill="#1c1c1c" stroke="#000" stroke-width="1" stroke-linejoin="round" /><circle cx="1048.5" cy="639.5" r="2.2" fill="#555"/><polygon points="1044.5,712.1 1036.3,719.0 1026.1,715.3 1024.3,704.7 1032.5,697.8 1042.7,701.5" fill="#1c1c1c" stroke="#000" stroke-width="1" stroke-linejoin="round" /><circle cx="1034.4" cy="708.4" r="2" fill="#555"/><path d="M1151 825 Q1159 815 1166 819 Q1171.5 823 1171.5 830 L1171.5 983 Q1171 991 1164 990 L1058 960 Q1047 956 1050 946 Z" fill="#d8d8d8" stroke="#222" stroke-width="1" transform="translate(4,-2)"/><path d="M1151 825 Q1159 815 1166 819 Q1171.5 823 1171.5 830 L1171.5 983 Q1171 991 1164 990 L1058 960 Q1047 956 1050 946 Z" fill="#7c7c7c" stroke="#161616" stroke-width="1"/><ellipse cx="1159.7" cy="834" rx="4.6" ry="4.8" fill="#4a4a4a" stroke="#161616" stroke-width="1.1"/><ellipse cx="1158.7" cy="835.1" rx="3.5" ry="3.6" fill="#f4f4f4"/><ellipse cx="1159.7" cy="881.8" rx="4.6" ry="4.8" fill="#4a4a4a" stroke="#161616" stroke-width="1.1"/><ellipse cx="1158.7" cy="882.9" rx="3.5" ry="3.6" fill="#f4f4f4"/><ellipse cx="1159.7" cy="929.5" rx="4.6" ry="4.8" fill="#4a4a4a" stroke="#161616" stroke-width="1.1"/><ellipse cx="1158.7" cy="930.6" rx="3.5" ry="3.6" fill="#f4f4f4"/><ellipse cx="1159.7" cy="977.1" rx="4.6" ry="4.8" fill="#4a4a4a" stroke="#161616" stroke-width="1.1"/><ellipse cx="1158.7" cy="978.2" rx="3.5" ry="3.6" fill="#f4f4f4"/><ellipse cx="1063.4" cy="950" rx="4.6" ry="4.8" fill="#4a4a4a" stroke="#161616" stroke-width="1.1"/><ellipse cx="1062.4" cy="951.1" rx="3.5" ry="3.6" fill="#f4f4f4"/><ellipse cx="1112" cy="963.5" rx="4.6" ry="4.8" fill="#4a4a4a" stroke="#161616" stroke-width="1.1"/><ellipse cx="1111" cy="964.6" rx="3.5" ry="3.6" fill="#f4f4f4"/><circle cx="1215" cy="982" r="5" fill="#fff" stroke="#222" stroke-width="1.6"/><circle cx="1215" cy="982" r="1.8" fill="#222"/></svg>
<svg class="i" style="left:1740px;top:80px" width="179" height="180" viewBox="0 0 179 180"><path d="M90 10 L97 19 H83 Z" fill="#8a8a8a"/><path d="M90 160 L97 151 H83 Z" fill="#8a8a8a"/><path d="M16 86 L25 78 V93 Z" fill="#8a8a8a"/><path d="M164 86 L155 78 V93 Z" fill="#8a8a8a"/><path d="M68 22 C56 25 46 32 40 40" fill="none" stroke="#8a8a8a" stroke-width="5"/><path d="M36 45 L51 42 L38 35 Z" fill="#8a8a8a"/><path d="M111 22 C123 25 133 32 139 40" fill="none" stroke="#8a8a8a" stroke-width="5"/><path d="M143 45 L128 42 L141 35 Z" fill="#8a8a8a"/><path d="M56 62 L80 45 L120 55 L128 68 V110 L100 128 L62 118 L52 102 Z" fill="#f0f3f4" stroke="#e2e6e8" stroke-width="3"/><path d="M62 72 L102 80 L124 63 M102 80 V125" fill="none" stroke="#dde3e6" stroke-width="4"/><circle cx="58" cy="70" r="5" fill="#fff"/><circle cx="98" cy="81" r="6" fill="#fff"/><circle cx="120" cy="58" r="4" fill="#fff"/><path d="M80 120 L62 102" stroke="#fff" stroke-width="4"/><path d="M78.5 40 V91" stroke="#6b6bdc" stroke-width="1.3"/><path d="M78.5 91 L128 105" stroke="#3aa83a" stroke-width="1.3"/><path d="M78.5 91 L49 117" stroke="#e03030" stroke-width="1.3"/></svg>
<div class="t" style="left:1813px;top:106.69px;font-size:11px;color:#6b6bdc;font-weight:normal;font-style:normal;">Z</div>
<div class="t" style="left:1873px;top:182.69px;font-size:11px;color:#2a9a2a;font-weight:normal;font-style:normal;">Y</div>
<div class="t" style="left:1778px;top:196.69px;font-size:11px;color:#e02020;font-weight:normal;font-style:normal;">X</div>
<div class="t" style="left:1803px;top:169.27px;font-size:11.5px;color:#222;font-weight:normal;font-style:normal;transform:rotate(10deg);transform-origin:0 0;">Right</div>
<div class="t" style="left:1844px;top:166px;font-size:9px;color:#444;transform:rotate(-35deg) skewX(-10deg);font-style:italic">Back</div>
<div class="t" style="left:1823px;top:136px;font-size:9px;color:#444;transform:rotate(195deg)">Top</div>
<svg class="i" style="left:1865px;top:222px" width="19" height="19" viewBox="0 0 19 19"><path d="M9.5 1 L17.5 5 V14 L9.5 18 L1.5 14 V5 Z" fill="#d8d8d8" stroke="#333" stroke-width="1.2"/><path d="M1.5 5 L9.5 9 L17.5 5 M9.5 9 V18" fill="none" stroke="#333" stroke-width="1"/><path d="M1.5 5 L9.5 9 V18 L1.5 14Z" fill="#999"/></svg>
<svg class="i" style="left:1891px;top:230px" width="9" height="5" viewBox="0 0 9 5"><path d="M0 0 H9 L4.5 5 Z" fill="#333"/></svg>
<div class="a" style="left:1888px;top:433px;width:31px;height:133px;border:1px solid #c8c8c8;border-right:none;background:#fff"></div>
<div class="a" style="left:1889px;top:466px;width:30px;height:1px;background:#d6d6d6"></div>
<div class="a" style="left:1889px;top:499px;width:30px;height:1px;background:#d6d6d6"></div>
<div class="a" style="left:1889px;top:532px;width:30px;height:1px;background:#d6d6d6"></div>
<div class="a" style="left:1888px;top:577px;width:31px;height:100px;border:1px solid #c8c8c8;border-right:none;background:#fff"></div>
<div class="a" style="left:1889px;top:610px;width:30px;height:1px;background:#d6d6d6"></div>
<div class="a" style="left:1889px;top:643px;width:30px;height:1px;background:#d6d6d6"></div>
<svg class="i" style="left:1894px;top:440px" width="20" height="20" viewBox="0 0 20 20"><path d="M2 15 L10 3 L14 5 L8 16 Z" fill="#888"/><path d="M6 16 L14 6 L18 9 L10 17Z" fill="#aaa"/><rect x="1.5" y="13.5" width="17" height="5" rx="1" fill="#eee" stroke="#777"/><circle cx="4.5" cy="16" r="1.2" fill="#555"/></svg>
<svg class="i" style="left:1894px;top:473px" width="20" height="20" viewBox="0 0 20 20"><rect x="1" y="1" width="9" height="7" fill="#1f55b3"/><path d="M1 3.5 H10 M1 6 H10 M4 1 V8 M7 1 V8" stroke="#fff" stroke-width=".8"/><path d="M12 6 L18 9 V16 L12 19 L6 16 V9 Z M6 9 L12 12 L18 9 M12 12 V19" fill="#fff" stroke="#333" stroke-width="1.1"/></svg>
<svg class="i" style="left:1894px;top:506px" width="20" height="20" viewBox="0 0 20 20"><rect x="1" y="1" width="9" height="7" fill="#333"/><path d="M1 3.5 H10 M1 6 H10 M4 1 V8 M7 1 V8" stroke="#fff" stroke-width=".8"/><path d="M12 7 L16 9 V14 L12 16 L8 14 V9 Z" fill="#ddd" stroke="#333" stroke-width="1"/><path d="M4 9 C3 9 3 10 3 12 C3 14 2 14.5 2 14.5 C2 14.5 3 15 3 17 C3 19 4 19 5 19 M17 6 C18 6 18 7 18 9 C18 11 19 11.5 19 11.5 C19 11.5 18 12 18 14 C18 17 18 18 17 18" fill="none" stroke="#333" stroke-width="1"/></svg>
<svg class="i" style="left:1894px;top:539px" width="20" height="20" viewBox="0 0 20 20"><rect x="1" y="1" width="9" height="7" fill="#333"/><path d="M1 3.5 H10 M1 6 H10 M4 1 V8 M7 1 V8" stroke="#fff" stroke-width=".8"/><path d="M3 9 C1 12 1 16 3 19 M17 5 C19 9 19 15 17 19" fill="none" stroke="#333" stroke-width="1.5"/><path d="M6 17 C8 17 9 9 12 9 M6 10 C9 11 11 17 14 17" fill="none" stroke="#333" stroke-width="1.8"/></svg>
<svg class="i" style="left:1893px;top:583px" width="22" height="22" viewBox="0 0 22 22"><rect x="0" y="0" width="22" height="22" rx="2" fill="#ddd"/><path d="M3 7 L18 5 L20 17 L5 19 Z" fill="#333"/><circle cx="8.5" cy="12.5" r="2.4" fill="#6ea0e0"/><circle cx="14.5" cy="11.5" r="2.4" fill="#6ea0e0"/><path d="M8 2 L9 5 M11 1.5 V5 M14 2 L13 5" stroke="#1f55b3" stroke-width="1"/></svg>
<svg class="i" style="left:1893px;top:616px" width="22" height="22" viewBox="0 0 22 22"><rect x="0" y="0" width="22" height="22" rx="2" fill="#4caf50"/><rect x="1.5" y="1.5" width="19" height="19" fill="#4caf50" stroke="#8fd08f"/><path d="M3 5 C6 4 9 4 10.5 6 V18 C9 16 6 16 3 17 Z M19 5 C16 4 13 4 11.5 6 V18 C13 16 16 16 19 17 Z" fill="#fff"/></svg>
<svg class="i" style="left:1893px;top:649px" width="22" height="22" viewBox="0 0 22 22"><rect x="0" y="0" width="22" height="22" rx="2" fill="#1f55b3"/><rect x="1.5" y="1.5" width="19" height="19" fill="#1f55b3" stroke="#111"/><path d="M3 5 C6 4 9 4 10.5 6 V18 C9 16 6 16 3 17 Z M19 5 C16 4 13 4 11.5 6 V18 C13 16 16 16 19 17 Z" fill="#fff"/></svg>
<svg class="i" style="left:1821px;top:1028px" width="17" height="14" viewBox="0 0 17 14"><ellipse cx="11" cy="5.5" rx="5.3" ry="4.5" fill="#fff" stroke="#222" stroke-width="1.3"/><ellipse cx="11" cy="5" rx="2.8" ry="1.8" fill="none" stroke="#222" stroke-width="1"/><path d="M1 8 H11 V12.5 H1 Z" fill="#fff" stroke="#222" stroke-width="1.3"/><path d="M3 12 V10.5 M5 12 V10.5 M7 12 V10.5 M9 12 V10.5" stroke="#222" stroke-width=".6"/></svg>
<svg class="i" style="left:1855px;top:1028px" width="20" height="13" viewBox="0 0 20 13"><path d="M1 12.3 C1 5 5 1 10 1 C15 1 19 5 19 12.3 Z" fill="#fff" stroke="#222" stroke-width="1.3"/><path d="M5 10 C6 6 8 5 10 5 C12 5 14 6 15 10 Z" fill="#fff" stroke="#222" stroke-width="1"/></svg>
<svg class="i" style="left:1891px;top:1028px" width="16" height="15" viewBox="0 0 16 15"><path d="M2 1 H14 M8 1 V13 M1 13.5 H15" stroke="#222" stroke-width="1.5"/><path d="M3 1.5 L1 9 H5 Z M13 1.5 L11 9 H15 Z" fill="none" stroke="#222" stroke-width="1"/><path d="M1 8.5 H5 M11 8.5 H15" stroke="#222" stroke-width="1.8"/></svg>
</body></html>
